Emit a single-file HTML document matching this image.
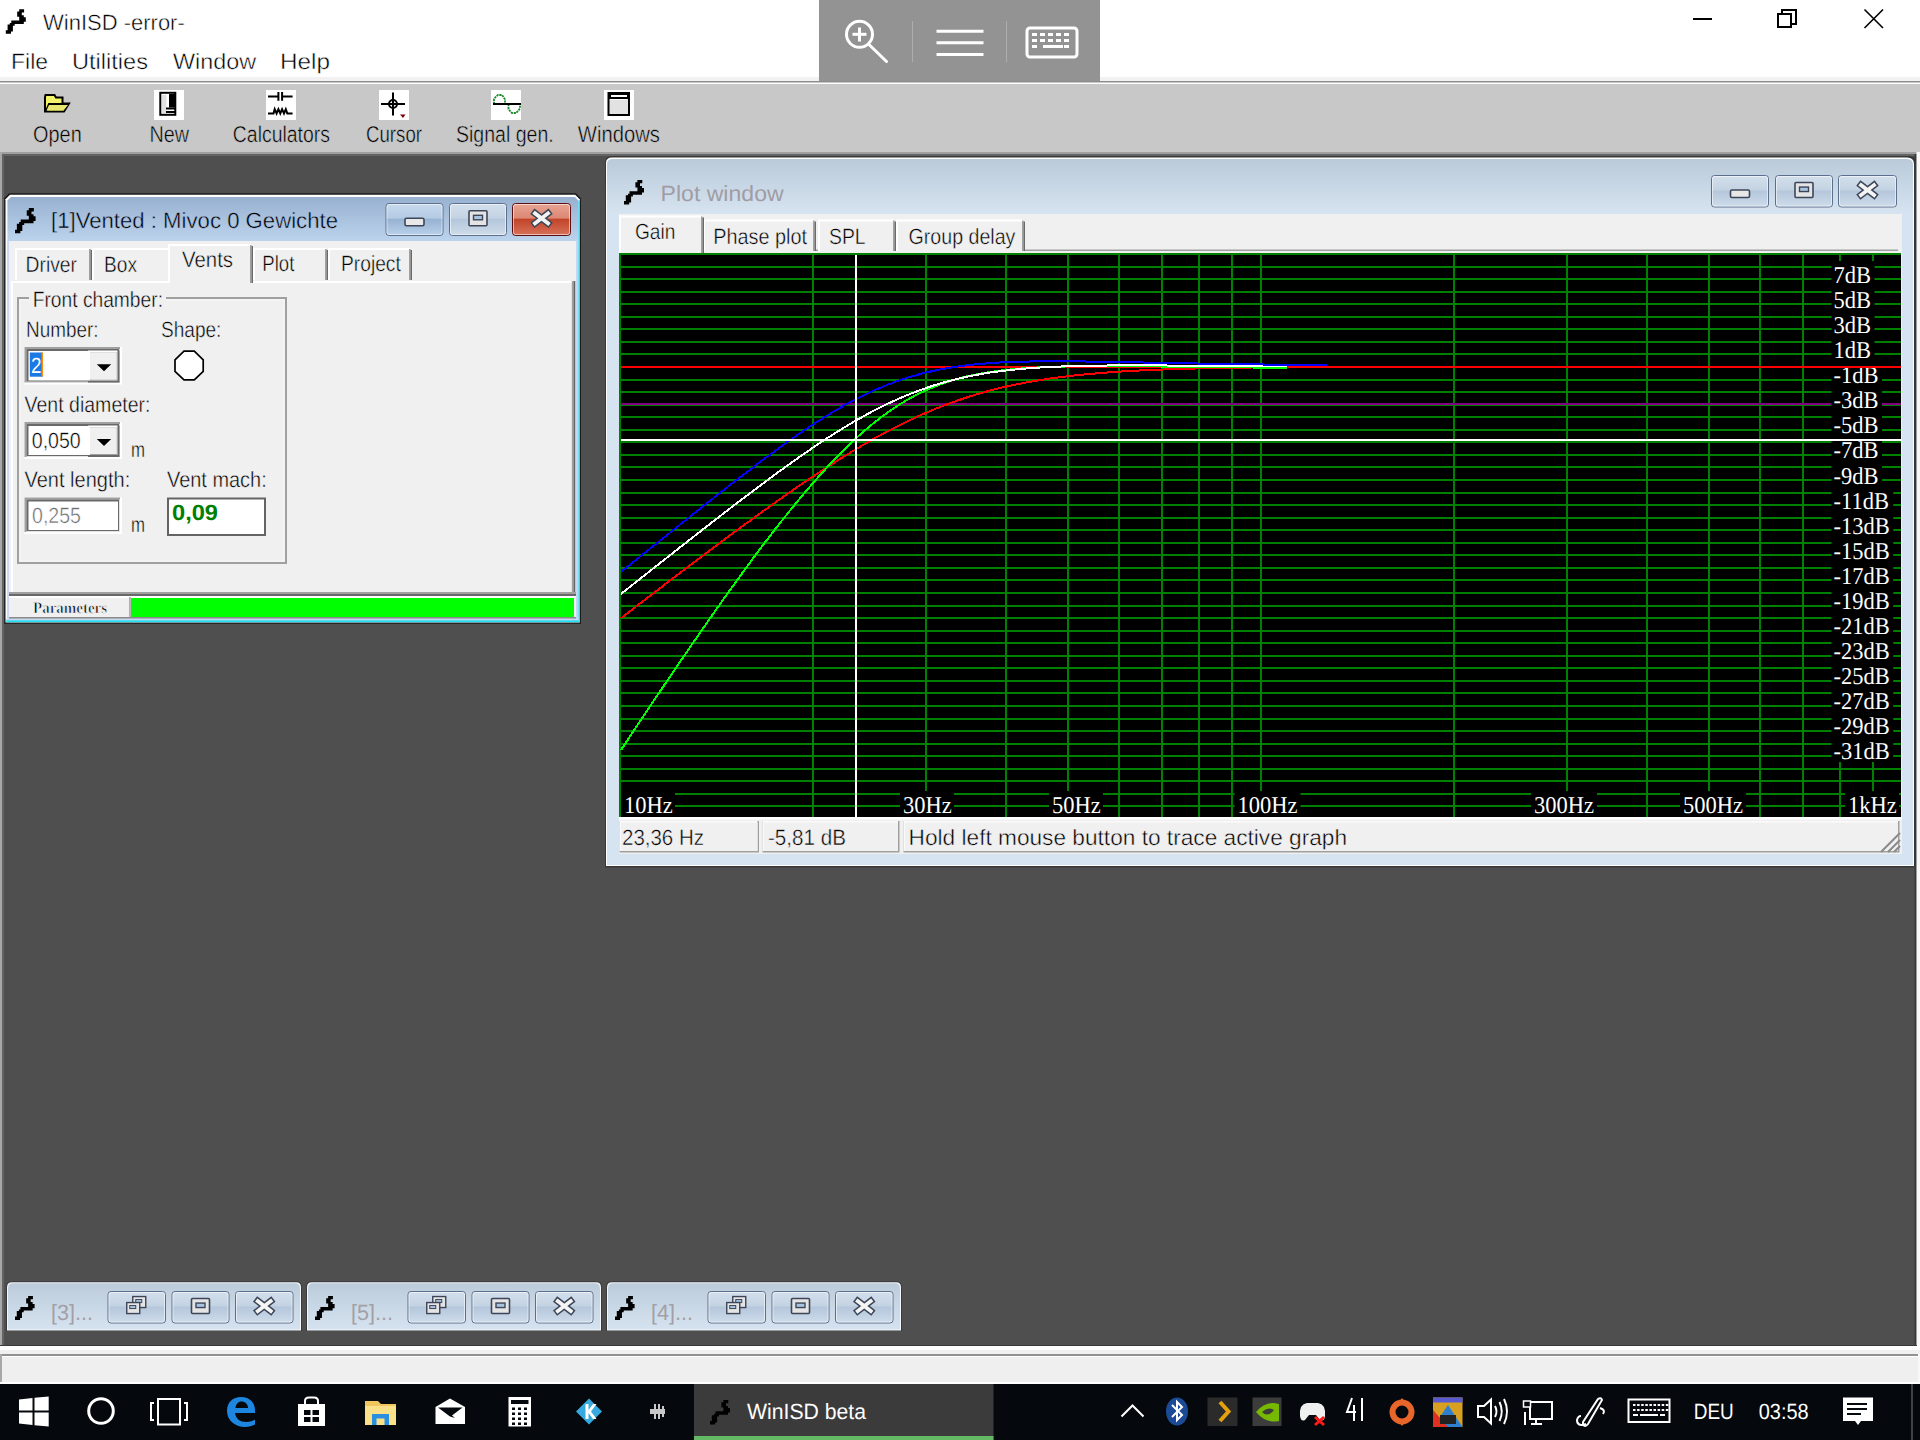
<!DOCTYPE html><html><head><meta charset="utf-8"><title>WinISD</title><style>html,body{margin:0;padding:0;width:1920px;height:1440px;overflow:hidden;background:#4f4f4f}svg{display:block}</style></head><body>
<svg width="1920" height="1440" viewBox="0 0 1920 1440" text-rendering="geometricPrecision">
<defs>

<linearGradient id="tbAct" gradientUnits="userSpaceOnUse" x1="0" y1="197" x2="0" y2="241"><stop offset="0" stop-color="#98b1d0"/><stop offset="1" stop-color="#bbd3ec"/></linearGradient>
<linearGradient id="tbInact" gradientUnits="userSpaceOnUse" x1="0" y1="159" x2="0" y2="214"><stop offset="0" stop-color="#bbcad9"/><stop offset="1" stop-color="#d6e4f1"/></linearGradient>
<linearGradient id="tbMin" gradientUnits="userSpaceOnUse" x1="0" y1="1283" x2="0" y2="1331"><stop offset="0" stop-color="#bccbda"/><stop offset="1" stop-color="#d6e4f1"/></linearGradient>
<linearGradient id="btnInact" x1="0" y1="0" x2="0" y2="1"><stop offset="0" stop-color="#d3dfeb"/><stop offset="0.45" stop-color="#c4d3e3"/><stop offset="0.5" stop-color="#b5c7dc"/><stop offset="1" stop-color="#cfdcea"/></linearGradient>
<linearGradient id="btnAct" x1="0" y1="0" x2="0" y2="1"><stop offset="0" stop-color="#c7d9ec"/><stop offset="0.45" stop-color="#b4cbe4"/><stop offset="0.5" stop-color="#97b3d3"/><stop offset="1" stop-color="#b9d0e9"/></linearGradient>
<linearGradient id="btnClose" x1="0" y1="0" x2="0" y2="1"><stop offset="0" stop-color="#e9a493"/><stop offset="0.45" stop-color="#dc8874"/><stop offset="0.5" stop-color="#c2452a"/><stop offset="1" stop-color="#d6735a"/></linearGradient>
<symbol id="appicon" overflow="visible">
<path fill="#000" d="M13.4,0 H18.3 V3.3 H16 V6.0 H18 V8.1 H20 V12.6 H18 V14.8 H8.9 V16.6 H7.1 V22.4 H5.2 V24.6 H0 V21 H1.8 V15.2 H4 V13.7 H5.5 V11.2 H13.4 V7.6 H11.4 V2.2 H13.4 Z"/>
</symbol>
</defs>
<rect x="0" y="0" width="1920" height="1440" fill="#4f4f4f" />
<rect x="0" y="0" width="1920" height="77" fill="#ffffff" />
<rect x="0" y="77" width="1920" height="4" fill="#f2f2f2" />
<rect x="0" y="81" width="1920" height="1" fill="#8c8c8c" />
<rect x="0" y="82" width="1920" height="1" fill="#c8c8c8" />
<rect x="0" y="83" width="1920" height="1" fill="#ffffff" />
<rect x="0" y="84" width="1920" height="68" fill="#c8c8c8" />
<rect x="0" y="152" width="1920" height="2" fill="#a0a0a0" />
<rect x="0" y="154" width="1920" height="2" fill="#646464" />
<rect x="0" y="152" width="2" height="1194" fill="#a8a8a8" />
<rect x="2" y="154" width="2" height="1192" fill="#646464" />
<rect x="1914.5" y="154" width="2" height="1192" fill="#3a3a3a" />
<rect x="1916.5" y="152" width="3.5" height="1232" fill="#f8f8f8" />
<rect x="0" y="1345" width="1917" height="1" fill="#3a3a3a" />
<rect x="0" y="1346" width="1920" height="4" fill="#ffffff" />
<rect x="0" y="1350" width="1920" height="4" fill="#f0f0f0" />
<rect x="0" y="1354" width="1918" height="2" fill="#919191" />
<rect x="0" y="1356" width="1918" height="1" fill="#ffffff" />
<rect x="0" y="1357" width="1918" height="25" fill="#efefef" />
<rect x="0" y="1382" width="1920" height="2" fill="#ffffff" />
<rect x="0" y="1354" width="2" height="28" fill="#a8a8a8" />
<use href="#appicon" transform="translate(5.8,9.2) scale(1.0)"/>
<text x="43" y="30" font-family="Liberation Sans" font-size="22" fill="#000" font-weight="normal" text-anchor="start" stroke="#ffffff" stroke-width="0.45" >WinISD -error-</text>
<text x="11" y="69" font-family="Liberation Sans" font-size="22" fill="#000" font-weight="normal" text-anchor="start" textLength="37" lengthAdjust="spacingAndGlyphs" stroke="#ffffff" stroke-width="0.45" >File</text>
<text x="72" y="69" font-family="Liberation Sans" font-size="22" fill="#000" font-weight="normal" text-anchor="start" textLength="76" lengthAdjust="spacingAndGlyphs" stroke="#ffffff" stroke-width="0.45" >Utilities</text>
<text x="173" y="69" font-family="Liberation Sans" font-size="22" fill="#000" font-weight="normal" text-anchor="start" textLength="83" lengthAdjust="spacingAndGlyphs" stroke="#ffffff" stroke-width="0.45" >Window</text>
<text x="280" y="69" font-family="Liberation Sans" font-size="22" fill="#000" font-weight="normal" text-anchor="start" textLength="50" lengthAdjust="spacingAndGlyphs" stroke="#ffffff" stroke-width="0.45" >Help</text>
<rect x="819" y="0" width="281" height="81" fill="#939393" />
<g fill="none" stroke="#fff" stroke-width="3"><circle cx="859.5" cy="34.3" r="13"/><line x1="852.5" y1="34.3" x2="866.5" y2="34.3"/><line x1="859.5" y1="27.5" x2="859.5" y2="41.5"/><line x1="869.5" y1="45" x2="886.5" y2="61.5" stroke-linecap="round"/><line x1="936.5" y1="31.3" x2="983.5" y2="31.3"/><line x1="936.5" y1="42.7" x2="983.5" y2="42.7"/><line x1="936.5" y1="54.6" x2="983.5" y2="54.6"/><rect x="1027" y="28" width="50" height="29" rx="3"/></g>
<rect x="912" y="21" width="1" height="41" fill="#adadad" />
<rect x="1006" y="21" width="1" height="41" fill="#adadad" />
<rect x="1032" y="33" width="5" height="3" fill="#fff" />
<rect x="1040" y="33" width="5" height="3" fill="#fff" />
<rect x="1048" y="33" width="5" height="3" fill="#fff" />
<rect x="1056" y="33" width="5" height="3" fill="#fff" />
<rect x="1064" y="33" width="5" height="3" fill="#fff" />
<rect x="1032" y="39" width="5" height="3" fill="#fff" />
<rect x="1040" y="39" width="5" height="3" fill="#fff" />
<rect x="1048" y="39" width="5" height="3" fill="#fff" />
<rect x="1056" y="39" width="5" height="3" fill="#fff" />
<rect x="1064" y="39" width="5" height="3" fill="#fff" />
<rect x="1032" y="45" width="5" height="3" fill="#fff" />
<rect x="1064" y="45" width="5" height="3" fill="#fff" />
<rect x="1043" y="45" width="20" height="3" fill="#fff" />
<rect x="1693" y="18" width="19" height="2" fill="#000" />
<g fill="none" stroke="#000" stroke-width="2"><rect x="1778" y="14" width="13" height="13"/><path d="M1782,13 V10 H1796 V24 H1792"/><path d="M1864.5,9.5 L1883,28 M1883,9.5 L1864.5,28" stroke-width="1.6"/></g>
<path d="M45.5,95 H54.5 L56,97.5 H62.5 V103.5 H69 L64,111.5 H45 V97 Z" fill="#f4f46a" stroke="#000" stroke-width="2" stroke-linejoin="miter"/>
<path d="M46,111 L49,104 H69" fill="none" stroke="#000" stroke-width="2"/>
<path d="M49,105 H68 L63.5,110.5 H46.5 Z" fill="#e8e870"/>
<rect x="154" y="90" width="30" height="30" fill="#fff" />
<rect x="160.3" y="92.8" width="15" height="22" fill="#fff" stroke="#000" stroke-width="2"/>
<rect x="162" y="95" width="4.5" height="18" fill="#e2e2e2" />
<rect x="169" y="94" width="6" height="13.5" fill="#000" />
<rect x="166" y="107.5" width="9" height="2" fill="#000" />
<rect x="166" y="111" width="9" height="2" fill="#000" />
<rect x="266" y="90" width="30" height="30" fill="#fff" />
<g stroke="#000" stroke-width="2" fill="none"><path d="M268,96.5 H278.4 M282.1,96.5 H292.6 M278.4,92 V100.8 M282.1,92 V100.8"/><path d="M268,113.4 H273.5 L274.7,109.2 L276.6,113.4 L278.4,109.2 L280.3,113.4 L282.1,109.2 L284,113.4 L285.8,109.2 L287.3,113.4 H292.6"/></g>
<rect x="379" y="90" width="30" height="30" fill="#fff" />
<g stroke="#000" stroke-width="2" fill="none"><path d="M393,92.5 V115.5 M381,104 H405"/><circle cx="393" cy="104" r="4"/></g>
<path d="M400,114.5 H405.5 L403,118 Z" fill="#7a0000"/>
<rect x="491" y="90" width="30" height="30" fill="#fff" />
<path d="M494,104 V99 L496,96.5 L498,95 H502 L503.5,97 L505,99.5 V104 M508.5,104 V109 L510.5,111.5 L512,113 H516 L518,111 L520,108.5 V104" fill="none" stroke="#1a8a2a" stroke-width="1.8" stroke-dasharray="2.2,0.8"/>
<rect x="493" y="103" width="28" height="2" fill="#000" />
<rect x="604" y="90" width="30" height="30" fill="#fff" />
<rect x="608.5" y="93" width="20.5" height="22" fill="#e2e2e2" />
<rect x="608.5" y="93" width="20.5" height="22" fill="none" stroke="#000" stroke-width="2"/>
<rect x="608.5" y="93" width="20.5" height="6" fill="#000" />
<rect x="611" y="95" width="16" height="2" fill="#fff" />
<rect x="610" y="99" width="17" height="1" fill="#fff" />
<g transform="translate(0,142) scale(1,1.1) translate(0,-142)">
<text x="33" y="142" font-family="Liberation Sans" font-size="21" fill="#000" font-weight="normal" text-anchor="start" textLength="48.7" lengthAdjust="spacingAndGlyphs" stroke="#c8c8c8" stroke-width="0.45" >Open</text>
<text x="149.4" y="142" font-family="Liberation Sans" font-size="21" fill="#000" font-weight="normal" text-anchor="start" textLength="39.6" lengthAdjust="spacingAndGlyphs" stroke="#c8c8c8" stroke-width="0.45" >New</text>
<text x="232.8" y="142" font-family="Liberation Sans" font-size="21" fill="#000" font-weight="normal" text-anchor="start" textLength="97.2" lengthAdjust="spacingAndGlyphs" stroke="#c8c8c8" stroke-width="0.45" >Calculators</text>
<text x="366" y="142" font-family="Liberation Sans" font-size="21" fill="#000" font-weight="normal" text-anchor="start" textLength="56" lengthAdjust="spacingAndGlyphs" stroke="#c8c8c8" stroke-width="0.45" >Cursor</text>
<text x="456" y="142" font-family="Liberation Sans" font-size="21" fill="#000" font-weight="normal" text-anchor="start" textLength="97.7" lengthAdjust="spacingAndGlyphs" stroke="#c8c8c8" stroke-width="0.45" >Signal gen.</text>
<text x="577.8" y="142" font-family="Liberation Sans" font-size="21" fill="#000" font-weight="normal" text-anchor="start" textLength="82.2" lengthAdjust="spacingAndGlyphs" stroke="#c8c8c8" stroke-width="0.45" >Windows</text>
</g>
<path d="M4.2,623.7 V198.3 L9.2,193.3 H576 L581,198.3 V623.7 Z" fill="#1a1a1a"/>
<path d="M5.5,622.4000000000001 V199.20000000000002 L10.0,194.70000000000002 H575.2 L579.7,199.20000000000002 V622.4000000000001 Z" fill="#ffffff"/>
<path d="M7.4,621.1 V200.5 L10.9,197.0 H574.9 L578.4,200.5 V621.1 Z" fill="url(#tbAct)"/>
<rect x="578.4" y="200.8" width="1.4" height="420.40000000000003" fill="#30d8f4" />
<rect x="6.2" y="620.2" width="572.8" height="2" fill="#22def0" />
<rect x="6.2" y="618.7" width="572.8" height="1.5" fill="#c8d8f0" />
<rect x="7.2" y="241" width="570.3" height="378.70000000000005" fill="#c8d8f0" />
<use href="#appicon" transform="translate(15,208) scale(1.03)"/>
<text x="51" y="228.4" font-family="Liberation Sans" font-size="22" fill="#000" font-weight="normal" text-anchor="start" textLength="287" lengthAdjust="spacingAndGlyphs" stroke="#abc4e1" stroke-width="0.45" >[1]Vented : Mivoc 0 Gewichte</text>
<rect x="386.0" y="203.5" width="57" height="32" rx="3" fill="url(#btnAct)" stroke="#5c6f8c" stroke-width="1"/>
<rect x="387.0" y="204.5" width="55" height="30" rx="2" fill="none" stroke="#ffffff" stroke-opacity="0.55" stroke-width="1"/>
<rect x="405.0" y="218.3" width="19" height="7.5" rx="1.5" fill="#e8e8e8" stroke="#3c4658" stroke-width="1.6"/>
<rect x="449.5" y="203.5" width="57" height="32" rx="3" fill="url(#btnInact)" stroke="#5c6f8c" stroke-width="1"/>
<rect x="450.5" y="204.5" width="55" height="30" rx="2" fill="none" stroke="#ffffff" stroke-opacity="0.55" stroke-width="1"/>
<rect x="469.0" y="210.8" width="18" height="15" rx="1" fill="#e4e4e4" stroke="#3c4658" stroke-width="1.6"/>
<rect x="473.5" y="215.3" width="9" height="4.5" fill="#a8c4e0" stroke="#3c4658" stroke-width="1.4"/>
<rect x="512.5" y="203.5" width="58" height="32" rx="3" fill="url(#btnClose)" stroke="#5a1010" stroke-width="1"/>
<rect x="513.5" y="204.5" width="56" height="30" rx="2" fill="none" stroke="#ffffff" stroke-opacity="0.55" stroke-width="1"/>
<path d="M535.0,213.3 L548.0,223.3 M548.0,213.3 L535.0,223.3" stroke="#3c4658" stroke-width="6.8" stroke-linecap="square"/>
<path d="M535.0,213.3 L548.0,223.3 M548.0,213.3 L535.0,223.3" stroke="#f4f4f4" stroke-width="3.8" stroke-linecap="square"/>
<rect x="9" y="241" width="567" height="353" fill="#f0f0f0" />
<rect x="15" y="248" width="77" height="33" fill="#f0f0f0" />
<rect x="15" y="248" width="2" height="33" fill="#ffffff" />
<rect x="15" y="248" width="75" height="2" fill="#ffffff" />
<rect x="89" y="249" width="1.5" height="32" fill="#a0a0a0" />
<rect x="90.5" y="250" width="1.5" height="31" fill="#696969" />
<rect x="92" y="248" width="79" height="33" fill="#f0f0f0" />
<rect x="92" y="248" width="2" height="33" fill="#ffffff" />
<rect x="92" y="248" width="77" height="2" fill="#ffffff" />
<rect x="168" y="249" width="1.5" height="32" fill="#a0a0a0" />
<rect x="169.5" y="250" width="1.5" height="31" fill="#696969" />
<rect x="253" y="248" width="75" height="33" fill="#f0f0f0" />
<rect x="253" y="248" width="2" height="33" fill="#ffffff" />
<rect x="253" y="248" width="73" height="2" fill="#ffffff" />
<rect x="325" y="249" width="1.5" height="32" fill="#a0a0a0" />
<rect x="326.5" y="250" width="1.5" height="31" fill="#696969" />
<rect x="328" y="248" width="84" height="33" fill="#f0f0f0" />
<rect x="328" y="248" width="2" height="33" fill="#ffffff" />
<rect x="328" y="248" width="82" height="2" fill="#ffffff" />
<rect x="409" y="249" width="1.5" height="32" fill="#a0a0a0" />
<rect x="410.5" y="250" width="1.5" height="31" fill="#696969" />
<rect x="11" y="280" width="565" height="314" fill="#f0f0f0" />
<rect x="11" y="281" width="563" height="2" fill="#ffffff" />
<rect x="11" y="281" width="2" height="311" fill="#ffffff" />
<rect x="571.8" y="281" width="1.7" height="313" fill="#a0a0a0" />
<rect x="573.5" y="281" width="1.8" height="313" fill="#656565" />
<rect x="168" y="244" width="85" height="39" fill="#f0f0f0" />
<rect x="168" y="244" width="2" height="39" fill="#ffffff" />
<rect x="168" y="244" width="83" height="2" fill="#ffffff" />
<rect x="250" y="245" width="1.5" height="38" fill="#a0a0a0" />
<rect x="251.5" y="246" width="1.5" height="37" fill="#696969" />
<rect x="170" y="280" width="80" height="4" fill="#f0f0f0" />
<text x="25.5" y="271.7" font-family="Liberation Sans" font-size="22" fill="#000" font-weight="normal" text-anchor="start" textLength="51.5" lengthAdjust="spacingAndGlyphs" stroke="#f0f0f0" stroke-width="0.45" >Driver</text>
<text x="104" y="271.7" font-family="Liberation Sans" font-size="22" fill="#000" font-weight="normal" text-anchor="start" textLength="33" lengthAdjust="spacingAndGlyphs" stroke="#f0f0f0" stroke-width="0.45" >Box</text>
<text x="182" y="267.4" font-family="Liberation Sans" font-size="22" fill="#000" font-weight="normal" text-anchor="start" textLength="51" lengthAdjust="spacingAndGlyphs" stroke="#f0f0f0" stroke-width="0.45" >Vents</text>
<text x="262.3" y="271" font-family="Liberation Sans" font-size="22" fill="#000" font-weight="normal" text-anchor="start" textLength="32" lengthAdjust="spacingAndGlyphs" stroke="#f0f0f0" stroke-width="0.45" >Plot</text>
<text x="341" y="271" font-family="Liberation Sans" font-size="22" fill="#000" font-weight="normal" text-anchor="start" textLength="59.8" lengthAdjust="spacingAndGlyphs" stroke="#f0f0f0" stroke-width="0.45" >Project</text>
<rect x="18" y="298" width="268" height="265" fill="none" stroke="#a0a0a0" stroke-width="2"/>
<rect x="20" y="300" width="264" height="261" fill="none" stroke="#ffffff" stroke-width="0.8" stroke-opacity="0.6"/>
<rect x="29" y="288" width="137" height="20" fill="#f0f0f0" />
<text x="32.7" y="307" font-family="Liberation Sans" font-size="22" fill="#000" font-weight="normal" text-anchor="start" textLength="130.3" lengthAdjust="spacingAndGlyphs" stroke="#f0f0f0" stroke-width="0.45" >Front chamber:</text>
<text x="26" y="337.4" font-family="Liberation Sans" font-size="22" fill="#000" font-weight="normal" text-anchor="start" textLength="72.5" lengthAdjust="spacingAndGlyphs" stroke="#f0f0f0" stroke-width="0.45" >Number:</text>
<text x="161" y="337.4" font-family="Liberation Sans" font-size="22" fill="#000" font-weight="normal" text-anchor="start" textLength="60.4" lengthAdjust="spacingAndGlyphs" stroke="#f0f0f0" stroke-width="0.45" >Shape:</text>
<rect x="24.5" y="347" width="97.5" height="37.5" fill="#ffffff" />
<rect x="24.5" y="347" width="95.5" height="35.5" fill="#a0a0a0" />
<rect x="26.5" y="349" width="93.5" height="33.5" fill="#e3e3e3" />
<rect x="26.5" y="349" width="92.5" height="32.5" fill="#696969" />
<rect x="28.5" y="351" width="89.5" height="29.5" fill="#fff" />
<rect x="88.0" y="350.5" width="31.5" height="32.0" fill="#696969" />
<rect x="88.0" y="350.5" width="29.5" height="30.0" fill="#ffffff" />
<rect x="90.0" y="352.5" width="27.5" height="28.0" fill="#a0a0a0" />
<rect x="90.0" y="352.5" width="26.5" height="27.0" fill="#f0f0f0" />
<rect x="91.0" y="353.5" width="25.5" height="26.0" fill="#f0f0f0" />
<path d="M96.8,364.25 H111.2 L104.0,371.25 Z" fill="#000"/>
<rect x="29.8" y="352.5" width="13" height="24.2" fill="#1c78e4" />
<text x="31" y="373" font-family="Liberation Sans" font-size="22" fill="#fff" font-weight="normal" text-anchor="start" textLength="10.5" lengthAdjust="spacingAndGlyphs" >2</text>
<rect x="41.5" y="352.5" width="1.5" height="24" fill="#ff8c00" />
<path d="M184,351.2 H194.3 L203.2,359.8 V371.3 L194.3,379.8 H184 L175,371.3 V359.8 Z" fill="#fff" stroke="#000" stroke-width="1.7"/>
<text x="24.5" y="412.2" font-family="Liberation Sans" font-size="22" fill="#000" font-weight="normal" text-anchor="start" textLength="126" lengthAdjust="spacingAndGlyphs" stroke="#f0f0f0" stroke-width="0.45" >Vent diameter:</text>
<rect x="24.5" y="422" width="97.5" height="37" fill="#ffffff" />
<rect x="24.5" y="422" width="95.5" height="35" fill="#a0a0a0" />
<rect x="26.5" y="424" width="93.5" height="33" fill="#e3e3e3" />
<rect x="26.5" y="424" width="92.5" height="32" fill="#696969" />
<rect x="28.5" y="426" width="89.5" height="29" fill="#fff" />
<rect x="88.0" y="425.5" width="31.5" height="31.5" fill="#696969" />
<rect x="88.0" y="425.5" width="29.5" height="29.5" fill="#ffffff" />
<rect x="90.0" y="427.5" width="27.5" height="27.5" fill="#a0a0a0" />
<rect x="90.0" y="427.5" width="26.5" height="26.5" fill="#f0f0f0" />
<rect x="91.0" y="428.5" width="25.5" height="25.5" fill="#f0f0f0" />
<path d="M96.8,439.0 H111.2 L104.0,446.0 Z" fill="#000"/>
<text x="31.75" y="448" font-family="Liberation Sans" font-size="22" fill="#000" font-weight="normal" text-anchor="start" textLength="49" lengthAdjust="spacingAndGlyphs" stroke="#ffffff" stroke-width="0.45" >0,050</text>
<text x="131" y="456.6" font-family="Liberation Sans" font-size="22" fill="#000" font-weight="normal" text-anchor="start" textLength="14" lengthAdjust="spacingAndGlyphs" stroke="#f0f0f0" stroke-width="0.45" >m</text>
<text x="24.5" y="487" font-family="Liberation Sans" font-size="22" fill="#000" font-weight="normal" text-anchor="start" textLength="105.7" lengthAdjust="spacingAndGlyphs" stroke="#f0f0f0" stroke-width="0.45" >Vent length:</text>
<text x="167" y="487" font-family="Liberation Sans" font-size="22" fill="#000" font-weight="normal" text-anchor="start" textLength="99.7" lengthAdjust="spacingAndGlyphs" stroke="#f0f0f0" stroke-width="0.45" >Vent mach:</text>
<rect x="24.5" y="497.5" width="97.5" height="36.5" fill="#ffffff" />
<rect x="24.5" y="497.5" width="95.5" height="34.5" fill="#a0a0a0" />
<rect x="26.5" y="499.5" width="93.5" height="32.5" fill="#e3e3e3" />
<rect x="26.5" y="499.5" width="92.5" height="31.5" fill="#696969" />
<rect x="28.5" y="501.5" width="89.5" height="28.5" fill="#fff" />
<text x="32" y="523" font-family="Liberation Sans" font-size="22" fill="#6d6d6d" font-weight="normal" text-anchor="start" textLength="49" lengthAdjust="spacingAndGlyphs" stroke="#ffffff" stroke-width="0.45" >0,255</text>
<text x="131" y="532" font-family="Liberation Sans" font-size="22" fill="#000" font-weight="normal" text-anchor="start" textLength="14" lengthAdjust="spacingAndGlyphs" stroke="#f0f0f0" stroke-width="0.45" >m</text>
<rect x="167" y="497.5" width="99" height="38.5" fill="#646464" />
<rect x="169" y="499.5" width="95" height="34.5" fill="#ffffff" />
<text x="172" y="520" font-family="Liberation Sans" font-size="22" fill="#008000" font-weight="bold" text-anchor="start" textLength="46" lengthAdjust="spacingAndGlyphs" >0,09</text>
<rect x="9" y="592" width="567" height="26" fill="#f0f0f0" />
<rect x="9" y="592" width="567" height="2" fill="#a0a0a0" />
<rect x="9" y="594" width="567" height="2" fill="#696969" />
<rect x="9" y="596" width="567" height="2" fill="#ffffff" />
<rect x="9" y="617" width="567" height="1.5" fill="#8a8a8a" />
<rect x="129.2" y="597" width="1.5" height="20" fill="#a0a0a0" />
<rect x="131" y="598" width="443" height="19" fill="#00ff00" />
<text x="33" y="612.7" font-family="Liberation Serif" font-size="16" fill="#000" font-weight="bold" text-anchor="start" textLength="74" lengthAdjust="spacingAndGlyphs" stroke="#f0f0f0" stroke-width="0.7" >Parameters</text>
<path d="M605,867.5 V163 Q605,156 612,156 H1909 Q1916,156 1916,163 V867.5 Z" fill="#383838"/>
<path d="M606,866.0 V163 Q606,157.5 612,157.5 H1907 Q1914,157.5 1914,164 V866.0 Z" fill="#ffffff"/>
<path d="M607,865.0 V164 Q607,159 613,159 H1907 Q1913,159 1913,165 V865.0 Z" fill="url(#tbInact)"/>
<rect x="607" y="214" width="1306" height="651.0" fill="#d6e3f0" />
<use href="#appicon" transform="translate(624,180) scale(1.0)"/>
<text x="660.6" y="200.6" font-family="Liberation Sans" font-size="22" fill="#a09ca4" font-weight="normal" text-anchor="start" textLength="123" lengthAdjust="spacingAndGlyphs" >Plot window</text>
<rect x="1711.5" y="175.5" width="57" height="31.5" rx="3" fill="url(#btnInact)" stroke="#5c6f8c" stroke-width="1"/>
<rect x="1712.5" y="176.5" width="55" height="29.5" rx="2" fill="none" stroke="#ffffff" stroke-opacity="0.55" stroke-width="1"/>
<rect x="1730.5" y="190.05" width="19" height="7.5" rx="1.5" fill="#e8e8e8" stroke="#3c4658" stroke-width="1.6"/>
<rect x="1775.5" y="175.5" width="57" height="31.5" rx="3" fill="url(#btnInact)" stroke="#5c6f8c" stroke-width="1"/>
<rect x="1776.5" y="176.5" width="55" height="29.5" rx="2" fill="none" stroke="#ffffff" stroke-opacity="0.55" stroke-width="1"/>
<rect x="1795.0" y="182.55" width="18" height="15" rx="1" fill="#e4e4e4" stroke="#3c4658" stroke-width="1.6"/>
<rect x="1799.5" y="187.05" width="9" height="4.5" fill="#a8c4e0" stroke="#3c4658" stroke-width="1.4"/>
<rect x="1838.5" y="175.5" width="58" height="31.5" rx="3" fill="url(#btnInact)" stroke="#5c6f8c" stroke-width="1"/>
<rect x="1839.5" y="176.5" width="56" height="29.5" rx="2" fill="none" stroke="#ffffff" stroke-opacity="0.55" stroke-width="1"/>
<path d="M1861.0,185.05 L1874.0,195.05 M1874.0,185.05 L1861.0,195.05" stroke="#3c4658" stroke-width="6.8" stroke-linecap="square"/>
<path d="M1861.0,185.05 L1874.0,195.05 M1874.0,185.05 L1861.0,195.05" stroke="#f4f4f4" stroke-width="3.8" stroke-linecap="square"/>
<rect x="619" y="214" width="1283" height="640" fill="#f0f0f0" />
<rect x="619" y="249.5" width="1279" height="1.5" fill="#a0a0a0" />
<rect x="703" y="219.5" width="113" height="31.5" fill="#f0f0f0" />
<rect x="703" y="219.5" width="2" height="31.5" fill="#ffffff" />
<rect x="703" y="219.5" width="111" height="2" fill="#ffffff" />
<rect x="813" y="220.5" width="1.5" height="30.5" fill="#a0a0a0" />
<rect x="814.5" y="221.5" width="1.5" height="29.5" fill="#696969" />
<rect x="818" y="219.5" width="78" height="31.5" fill="#f0f0f0" />
<rect x="818" y="219.5" width="2" height="31.5" fill="#ffffff" />
<rect x="818" y="219.5" width="76" height="2" fill="#ffffff" />
<rect x="893" y="220.5" width="1.5" height="30.5" fill="#a0a0a0" />
<rect x="894.5" y="221.5" width="1.5" height="29.5" fill="#696969" />
<rect x="896" y="219.5" width="129" height="31.5" fill="#f0f0f0" />
<rect x="896" y="219.5" width="2" height="31.5" fill="#ffffff" />
<rect x="896" y="219.5" width="127" height="2" fill="#ffffff" />
<rect x="1022" y="220.5" width="1.5" height="30.5" fill="#a0a0a0" />
<rect x="1023.5" y="221.5" width="1.5" height="29.5" fill="#696969" />
<rect x="619" y="215.5" width="85" height="37.5" fill="#f0f0f0" />
<rect x="619" y="215.5" width="2" height="37.5" fill="#ffffff" />
<rect x="619" y="215.5" width="83" height="2" fill="#ffffff" />
<rect x="701" y="216.5" width="1.5" height="36.5" fill="#a0a0a0" />
<rect x="702.5" y="217.5" width="1.5" height="35.5" fill="#696969" />
<text x="635" y="239.4" font-family="Liberation Sans" font-size="22" fill="#000" font-weight="normal" text-anchor="start" textLength="40.4" lengthAdjust="spacingAndGlyphs" stroke="#f0f0f0" stroke-width="0.45" >Gain</text>
<text x="713.3" y="243.7" font-family="Liberation Sans" font-size="22" fill="#000" font-weight="normal" text-anchor="start" textLength="93.7" lengthAdjust="spacingAndGlyphs" stroke="#f0f0f0" stroke-width="0.45" >Phase plot</text>
<text x="829" y="243.7" font-family="Liberation Sans" font-size="22" fill="#000" font-weight="normal" text-anchor="start" textLength="36.6" lengthAdjust="spacingAndGlyphs" stroke="#f0f0f0" stroke-width="0.45" >SPL</text>
<text x="908.6" y="243.7" font-family="Liberation Sans" font-size="22" fill="#000" font-weight="normal" text-anchor="start" textLength="106.8" lengthAdjust="spacingAndGlyphs" stroke="#f0f0f0" stroke-width="0.45" >Group delay</text>
<rect x="619" y="817" width="1283" height="37" fill="#f0f0f0" />
<rect x="619" y="817" width="1283" height="2.5" fill="#ffffff" />
<rect x="619.5" y="821" width="139.5" height="31.5" fill="#a0a0a0" />
<rect x="619.5" y="821" width="138.0" height="30.0" fill="#fafafa" />
<rect x="621.0" y="822.5" width="136.5" height="28.5" fill="#f0f0f0" />
<rect x="762.5" y="821" width="137" height="31.5" fill="#a0a0a0" />
<rect x="762.5" y="821" width="135.5" height="30.0" fill="#fafafa" />
<rect x="764.0" y="822.5" width="134" height="28.5" fill="#f0f0f0" />
<rect x="903.5" y="821" width="996" height="31.5" fill="#a0a0a0" />
<rect x="903.5" y="821" width="994.5" height="30.0" fill="#fafafa" />
<rect x="905.0" y="822.5" width="993" height="28.5" fill="#f0f0f0" />
<text x="622" y="844.5" font-family="Liberation Sans" font-size="22" fill="#000" font-weight="normal" text-anchor="start" textLength="82" lengthAdjust="spacingAndGlyphs" stroke="#f0f0f0" stroke-width="0.45" >23,36 Hz</text>
<text x="768" y="844.5" font-family="Liberation Sans" font-size="22" fill="#000" font-weight="normal" text-anchor="start" textLength="78" lengthAdjust="spacingAndGlyphs" stroke="#f0f0f0" stroke-width="0.45" >-5,81 dB</text>
<text x="908.6" y="844.5" font-family="Liberation Sans" font-size="22" fill="#000" font-weight="normal" text-anchor="start" textLength="438.4" lengthAdjust="spacingAndGlyphs" stroke="#f0f0f0" stroke-width="0.45" >Hold left mouse button to trace active graph</text>
<g stroke="#8a8a8a" stroke-width="2"><path d="M1881,852 L1900,833 M1888,852 L1900,840 M1894,852 L1900,846"/></g>
<rect x="619" y="253" width="1282" height="564" fill="#000000" />
<g shape-rendering="crispEdges">
<rect x="619" y="266" width="1282" height="2" fill="#008000" />
<rect x="619" y="278" width="1282" height="2" fill="#008000" />
<rect x="619" y="291" width="1282" height="2" fill="#008000" />
<rect x="619" y="303" width="1282" height="2" fill="#008000" />
<rect x="619" y="316" width="1282" height="2" fill="#008000" />
<rect x="619" y="328" width="1282" height="2" fill="#008000" />
<rect x="619" y="341" width="1282" height="2" fill="#008000" />
<rect x="619" y="353" width="1282" height="2" fill="#008000" />
<rect x="619" y="366" width="1282" height="2" fill="#008000" />
<rect x="619" y="379" width="1282" height="2" fill="#008000" />
<rect x="619" y="391" width="1282" height="2" fill="#008000" />
<rect x="619" y="404" width="1282" height="2" fill="#008000" />
<rect x="619" y="416" width="1282" height="2" fill="#008000" />
<rect x="619" y="429" width="1282" height="2" fill="#008000" />
<rect x="619" y="441" width="1282" height="2" fill="#008000" />
<rect x="619" y="454" width="1282" height="2" fill="#008000" />
<rect x="619" y="466" width="1282" height="2" fill="#008000" />
<rect x="619" y="479" width="1282" height="2" fill="#008000" />
<rect x="619" y="492" width="1282" height="2" fill="#008000" />
<rect x="619" y="504" width="1282" height="2" fill="#008000" />
<rect x="619" y="517" width="1282" height="2" fill="#008000" />
<rect x="619" y="529" width="1282" height="2" fill="#008000" />
<rect x="619" y="542" width="1282" height="2" fill="#008000" />
<rect x="619" y="554" width="1282" height="2" fill="#008000" />
<rect x="619" y="567" width="1282" height="2" fill="#008000" />
<rect x="619" y="579" width="1282" height="2" fill="#008000" />
<rect x="619" y="592" width="1282" height="2" fill="#008000" />
<rect x="619" y="605" width="1282" height="2" fill="#008000" />
<rect x="619" y="617" width="1282" height="2" fill="#008000" />
<rect x="619" y="630" width="1282" height="2" fill="#008000" />
<rect x="619" y="642" width="1282" height="2" fill="#008000" />
<rect x="619" y="655" width="1282" height="2" fill="#008000" />
<rect x="619" y="667" width="1282" height="2" fill="#008000" />
<rect x="619" y="680" width="1282" height="2" fill="#008000" />
<rect x="619" y="692" width="1282" height="2" fill="#008000" />
<rect x="619" y="705" width="1282" height="2" fill="#008000" />
<rect x="619" y="718" width="1282" height="2" fill="#008000" />
<rect x="619" y="730" width="1282" height="2" fill="#008000" />
<rect x="619" y="743" width="1282" height="2" fill="#008000" />
<rect x="619" y="755" width="1282" height="2" fill="#008000" />
<rect x="619" y="768" width="1282" height="2" fill="#008000" />
<rect x="619" y="780" width="1282" height="2" fill="#008000" />
<rect x="619" y="793" width="1282" height="2" fill="#008000" />
<rect x="619" y="805" width="1282" height="2" fill="#008000" />
<rect x="812" y="253" width="2" height="564" fill="#008000" />
<rect x="925" y="253" width="2" height="564" fill="#008000" />
<rect x="1005" y="253" width="2" height="564" fill="#008000" />
<rect x="1067" y="253" width="2" height="564" fill="#008000" />
<rect x="1118" y="253" width="2" height="564" fill="#008000" />
<rect x="1161" y="253" width="2" height="564" fill="#008000" />
<rect x="1198" y="253" width="2" height="564" fill="#008000" />
<rect x="1231" y="253" width="2" height="564" fill="#008000" />
<rect x="1260" y="253" width="2" height="564" fill="#008000" />
<rect x="1453" y="253" width="2" height="564" fill="#008000" />
<rect x="1566" y="253" width="2" height="564" fill="#008000" />
<rect x="1646" y="253" width="2" height="564" fill="#008000" />
<rect x="1708" y="253" width="2" height="564" fill="#008000" />
<rect x="1759" y="253" width="2" height="564" fill="#008000" />
<rect x="1802" y="253" width="2" height="564" fill="#008000" />
<rect x="1839" y="253" width="2" height="564" fill="#008000" />
<rect x="1872" y="253" width="2" height="564" fill="#008000" />
<rect x="619" y="253" width="1282" height="2" fill="#008000" />
<rect x="619" y="253" width="2" height="564" fill="#008000" />
<rect x="621" y="403" width="1280" height="2" fill="#800080" />
</g>
<rect x="1831.5" y="261" width="43.0" height="26" fill="#000" />
<g transform="translate(0,283.20) scale(1,1.07) translate(0,-283.20)">
<text x="1833.5" y="283.2" font-family="Liberation Serif" font-size="22.5" fill="#ffffff" font-weight="normal" text-anchor="start" >7dB</text>
</g>
<rect x="1831.5" y="286" width="43.0" height="26" fill="#000" />
<g transform="translate(0,308.24) scale(1,1.07) translate(0,-308.24)">
<text x="1833.5" y="308.24" font-family="Liberation Serif" font-size="22.5" fill="#ffffff" font-weight="normal" text-anchor="start" >5dB</text>
</g>
<rect x="1831.5" y="311" width="43.0" height="26" fill="#000" />
<g transform="translate(0,333.28) scale(1,1.07) translate(0,-333.28)">
<text x="1833.5" y="333.28" font-family="Liberation Serif" font-size="22.5" fill="#ffffff" font-weight="normal" text-anchor="start" >3dB</text>
</g>
<rect x="1831.5" y="336" width="43.0" height="26" fill="#000" />
<g transform="translate(0,358.32) scale(1,1.07) translate(0,-358.32)">
<text x="1833.5" y="358.32" font-family="Liberation Serif" font-size="22.5" fill="#ffffff" font-weight="normal" text-anchor="start" >1dB</text>
</g>
<rect x="1831.5" y="361" width="50.5" height="26" fill="#000" />
<g transform="translate(0,383.36) scale(1,1.07) translate(0,-383.36)">
<text x="1833.5" y="383.36" font-family="Liberation Serif" font-size="22.5" fill="#ffffff" font-weight="normal" text-anchor="start" >-1dB</text>
</g>
<rect x="1831.5" y="386" width="50.5" height="26" fill="#000" />
<g transform="translate(0,408.40) scale(1,1.07) translate(0,-408.40)">
<text x="1833.5" y="408.4" font-family="Liberation Serif" font-size="22.5" fill="#ffffff" font-weight="normal" text-anchor="start" >-3dB</text>
</g>
<rect x="1831.5" y="411" width="50.5" height="26" fill="#000" />
<g transform="translate(0,433.44) scale(1,1.07) translate(0,-433.44)">
<text x="1833.5" y="433.44" font-family="Liberation Serif" font-size="22.5" fill="#ffffff" font-weight="normal" text-anchor="start" >-5dB</text>
</g>
<rect x="1831.5" y="436" width="50.5" height="26" fill="#000" />
<g transform="translate(0,458.48) scale(1,1.07) translate(0,-458.48)">
<text x="1833.5" y="458.48" font-family="Liberation Serif" font-size="22.5" fill="#ffffff" font-weight="normal" text-anchor="start" >-7dB</text>
</g>
<rect x="1831.5" y="461" width="50.5" height="26" fill="#000" />
<g transform="translate(0,483.52) scale(1,1.07) translate(0,-483.52)">
<text x="1833.5" y="483.52" font-family="Liberation Serif" font-size="22.5" fill="#ffffff" font-weight="normal" text-anchor="start" >-9dB</text>
</g>
<rect x="1831.5" y="486" width="61.75" height="26" fill="#000" />
<g transform="translate(0,508.56) scale(1,1.07) translate(0,-508.56)">
<text x="1833.5" y="508.55999999999995" font-family="Liberation Serif" font-size="22.5" fill="#ffffff" font-weight="normal" text-anchor="start" >-11dB</text>
</g>
<rect x="1831.5" y="511" width="61.75" height="26" fill="#000" />
<g transform="translate(0,533.60) scale(1,1.07) translate(0,-533.60)">
<text x="1833.5" y="533.5999999999999" font-family="Liberation Serif" font-size="22.5" fill="#ffffff" font-weight="normal" text-anchor="start" >-13dB</text>
</g>
<rect x="1831.5" y="536" width="61.75" height="26" fill="#000" />
<g transform="translate(0,558.64) scale(1,1.07) translate(0,-558.64)">
<text x="1833.5" y="558.64" font-family="Liberation Serif" font-size="22.5" fill="#ffffff" font-weight="normal" text-anchor="start" >-15dB</text>
</g>
<rect x="1831.5" y="561" width="61.75" height="26" fill="#000" />
<g transform="translate(0,583.68) scale(1,1.07) translate(0,-583.68)">
<text x="1833.5" y="583.6800000000001" font-family="Liberation Serif" font-size="22.5" fill="#ffffff" font-weight="normal" text-anchor="start" >-17dB</text>
</g>
<rect x="1831.5" y="586" width="61.75" height="26" fill="#000" />
<g transform="translate(0,608.72) scale(1,1.07) translate(0,-608.72)">
<text x="1833.5" y="608.72" font-family="Liberation Serif" font-size="22.5" fill="#ffffff" font-weight="normal" text-anchor="start" >-19dB</text>
</g>
<rect x="1831.5" y="611" width="61.75" height="26" fill="#000" />
<g transform="translate(0,633.76) scale(1,1.07) translate(0,-633.76)">
<text x="1833.5" y="633.76" font-family="Liberation Serif" font-size="22.5" fill="#ffffff" font-weight="normal" text-anchor="start" >-21dB</text>
</g>
<rect x="1831.5" y="636" width="61.75" height="26" fill="#000" />
<g transform="translate(0,658.80) scale(1,1.07) translate(0,-658.80)">
<text x="1833.5" y="658.8" font-family="Liberation Serif" font-size="22.5" fill="#ffffff" font-weight="normal" text-anchor="start" >-23dB</text>
</g>
<rect x="1831.5" y="661" width="61.75" height="26" fill="#000" />
<g transform="translate(0,683.84) scale(1,1.07) translate(0,-683.84)">
<text x="1833.5" y="683.8399999999999" font-family="Liberation Serif" font-size="22.5" fill="#ffffff" font-weight="normal" text-anchor="start" >-25dB</text>
</g>
<rect x="1831.5" y="686" width="61.75" height="26" fill="#000" />
<g transform="translate(0,708.88) scale(1,1.07) translate(0,-708.88)">
<text x="1833.5" y="708.88" font-family="Liberation Serif" font-size="22.5" fill="#ffffff" font-weight="normal" text-anchor="start" >-27dB</text>
</g>
<rect x="1831.5" y="711" width="61.75" height="26" fill="#000" />
<g transform="translate(0,733.92) scale(1,1.07) translate(0,-733.92)">
<text x="1833.5" y="733.92" font-family="Liberation Serif" font-size="22.5" fill="#ffffff" font-weight="normal" text-anchor="start" >-29dB</text>
</g>
<rect x="1831.5" y="736" width="61.75" height="26" fill="#000" />
<g transform="translate(0,758.96) scale(1,1.07) translate(0,-758.96)">
<text x="1833.5" y="758.96" font-family="Liberation Serif" font-size="22.5" fill="#ffffff" font-weight="normal" text-anchor="start" >-31dB</text>
</g>
<rect x="621" y="791" width="54" height="26" fill="#000" />
<g transform="translate(0,813) scale(1,1.07) translate(0,-813)">
<text x="624" y="813" font-family="Liberation Serif" font-size="22.5" fill="#ffffff" font-weight="normal" text-anchor="start" >10Hz</text>
</g>
<rect x="900" y="791" width="54" height="26" fill="#000" />
<g transform="translate(0,813) scale(1,1.07) translate(0,-813)">
<text x="903" y="813" font-family="Liberation Serif" font-size="22.5" fill="#ffffff" font-weight="normal" text-anchor="start" >30Hz</text>
</g>
<rect x="1049" y="791" width="54" height="26" fill="#000" />
<g transform="translate(0,813) scale(1,1.07) translate(0,-813)">
<text x="1052" y="813" font-family="Liberation Serif" font-size="22.5" fill="#ffffff" font-weight="normal" text-anchor="start" >50Hz</text>
</g>
<rect x="1234.5" y="791" width="66" height="26" fill="#000" />
<g transform="translate(0,813) scale(1,1.07) translate(0,-813)">
<text x="1237.5" y="813" font-family="Liberation Serif" font-size="22.5" fill="#ffffff" font-weight="normal" text-anchor="start" >100Hz</text>
</g>
<rect x="1531" y="791" width="66" height="26" fill="#000" />
<g transform="translate(0,813) scale(1,1.07) translate(0,-813)">
<text x="1534" y="813" font-family="Liberation Serif" font-size="22.5" fill="#ffffff" font-weight="normal" text-anchor="start" >300Hz</text>
</g>
<rect x="1680" y="791" width="66" height="26" fill="#000" />
<g transform="translate(0,813) scale(1,1.07) translate(0,-813)">
<text x="1683" y="813" font-family="Liberation Serif" font-size="22.5" fill="#ffffff" font-weight="normal" text-anchor="start" >500Hz</text>
</g>
<rect x="1845" y="791" width="54" height="26" fill="#000" />
<g transform="translate(0,813) scale(1,1.07) translate(0,-813)">
<text x="1848" y="813" font-family="Liberation Serif" font-size="22.5" fill="#ffffff" font-weight="normal" text-anchor="start" >1kHz</text>
</g>
<rect x="621" y="366" width="1280" height="2" fill="#ff0000" />
<path d="M621.0,618.2 L623.0,616.6 L625.0,615.1 L627.0,613.5 L629.0,612.0 L631.0,610.5 L633.0,608.9 L635.0,607.4 L637.0,605.8 L639.0,604.3 L641.0,602.8 L643.0,601.2 L645.0,599.7 L647.0,598.1 L649.0,596.6 L651.0,595.1 L653.0,593.5 L655.0,592.0 L657.0,590.5 L659.0,588.9 L661.0,587.4 L663.0,585.9 L665.0,584.3 L667.0,582.8 L669.0,581.3 L671.0,579.8 L673.0,578.2 L675.0,576.7 L677.0,575.2 L679.0,573.7 L681.0,572.2 L683.0,570.6 L685.0,569.1 L687.0,567.6 L689.0,566.1 L691.0,564.6 L693.0,563.1 L695.0,561.5 L697.0,560.0 L699.0,558.5 L701.0,557.0 L703.0,555.5 L705.0,554.0 L707.0,552.5 L709.0,551.0 L711.0,549.5 L713.0,548.0 L715.0,546.5 L717.0,545.0 L719.0,543.5 L721.0,542.0 L723.0,540.5 L725.0,539.0 L727.0,537.6 L729.0,536.1 L731.0,534.6 L733.0,533.1 L735.0,531.6 L737.0,530.2 L739.0,528.7 L741.0,527.2 L743.0,525.8 L745.0,524.3 L747.0,522.8 L749.0,521.4 L751.0,519.9 L753.0,518.5 L755.0,517.0 L757.0,515.6 L759.0,514.1 L761.0,512.7 L763.0,511.2 L765.0,509.8 L767.0,508.4 L769.0,506.9 L771.0,505.5 L773.0,504.1 L775.0,502.7 L777.0,501.2 L779.0,499.8 L781.0,498.4 L783.0,497.0 L785.0,495.6 L787.0,494.2 L789.0,492.8 L791.0,491.4 L793.0,490.0 L795.0,488.7 L797.0,487.3 L799.0,485.9 L801.0,484.5 L803.0,483.2 L805.0,481.8 L807.0,480.5 L809.0,479.1 L811.0,477.8 L813.0,476.4 L815.0,475.1 L817.0,473.8 L819.0,472.5 L821.0,471.2 L823.0,469.8 L825.0,468.5 L827.0,467.2 L829.0,465.9 L831.0,464.7 L833.0,463.4 L835.0,462.1 L837.0,460.8 L839.0,459.6 L841.0,458.3 L843.0,457.1 L845.0,455.8 L847.0,454.6 L849.0,453.4 L851.0,452.2 L853.0,451.0 L855.0,449.8 L857.0,448.6 L859.0,447.4 L861.0,446.2 L863.0,445.0 L865.0,443.9 L867.0,442.7 L869.0,441.6 L871.0,440.4 L873.0,439.3 L875.0,438.2 L877.0,437.1 L879.0,436.0 L881.0,434.9 L883.0,433.8 L885.0,432.7 L887.0,431.6 L889.0,430.6 L891.0,429.5 L893.0,428.5 L895.0,427.5 L897.0,426.5 L899.0,425.4 L901.0,424.5 L903.0,423.5 L905.0,422.5 L907.0,421.5 L909.0,420.6 L911.0,419.6 L913.0,418.7 L915.0,417.7 L917.0,416.8 L919.0,415.9 L921.0,415.0 L923.0,414.1 L925.0,413.3 L927.0,412.4 L929.0,411.5 L931.0,410.7 L933.0,409.9 L935.0,409.0 L937.0,408.2 L939.0,407.4 L941.0,406.6 L943.0,405.9 L945.0,405.1 L947.0,404.3 L949.0,403.6 L951.0,402.9 L953.0,402.1 L955.0,401.4 L957.0,400.7 L959.0,400.0 L961.0,399.3 L963.0,398.7 L965.0,398.0 L967.0,397.4 L969.0,396.7 L971.0,396.1 L973.0,395.5 L975.0,394.9 L977.0,394.3 L979.0,393.7 L981.0,393.1 L983.0,392.5 L985.0,392.0 L987.0,391.4 L989.0,390.9 L991.0,390.3 L993.0,389.8 L995.0,389.3 L997.0,388.8 L999.0,388.3 L1001.0,387.8 L1003.0,387.3 L1005.0,386.9 L1007.0,386.4 L1009.0,386.0 L1011.0,385.5 L1013.0,385.1 L1015.0,384.7 L1017.0,384.3 L1019.0,383.9 L1021.0,383.5 L1023.0,383.1 L1025.0,382.7 L1027.0,382.3 L1029.0,382.0 L1031.0,381.6 L1033.0,381.3 L1035.0,380.9 L1037.0,380.6 L1039.0,380.2 L1041.0,379.9 L1043.0,379.6 L1045.0,379.3 L1047.0,379.0 L1049.0,378.7 L1051.0,378.4 L1053.0,378.1 L1055.0,377.9 L1057.0,377.6 L1059.0,377.3 L1061.0,377.1 L1063.0,376.8 L1065.0,376.6 L1067.0,376.3 L1069.0,376.1 L1071.0,375.9 L1073.0,375.6 L1075.0,375.4 L1077.0,375.2 L1079.0,375.0 L1081.0,374.8 L1083.0,374.6 L1085.0,374.4 L1087.0,374.2 L1089.0,374.0 L1091.0,373.8 L1093.0,373.6 L1095.0,373.5 L1097.0,373.3 L1099.0,373.1 L1101.0,373.0 L1103.0,372.8 L1105.0,372.7 L1107.0,372.5 L1109.0,372.4 L1111.0,372.2 L1113.0,372.1 L1115.0,371.9 L1117.0,371.8 L1119.0,371.7 L1121.0,371.5 L1123.0,371.4 L1125.0,371.3 L1127.0,371.2 L1129.0,371.1 L1131.0,371.0 L1133.0,370.8 L1135.0,370.7 L1137.0,370.6 L1139.0,370.5 L1141.0,370.4 L1143.0,370.3 L1145.0,370.2 L1147.0,370.1 L1149.0,370.1 L1151.0,370.0 L1153.0,369.9 L1155.0,369.8 L1157.0,369.7 L1159.0,369.6 L1161.0,369.6 L1163.0,369.5 L1165.0,369.4 L1167.0,369.3 L1169.0,369.3 L1171.0,369.2 L1173.0,369.1 L1175.0,369.1 L1177.0,369.0 L1179.0,368.9 L1181.0,368.9 L1183.0,368.8 L1185.0,368.8 L1187.0,368.7 L1189.0,368.6 L1191.0,368.6 L1193.0,368.5 L1195.0,368.5 L1197.0,368.4 L1199.0,368.4 L1201.0,368.3 L1203.0,368.3 L1205.0,368.3 L1207.0,368.2 L1209.0,368.2 L1211.0,368.1 L1213.0,368.1 L1215.0,368.0 L1217.0,368.0 L1219.0,368.0 L1221.0,367.9 L1223.0,367.9 L1225.0,367.9 L1227.0,367.8 L1229.0,367.8 L1231.0,367.8 L1233.0,367.7 L1235.0,367.7 L1237.0,367.7 L1239.0,367.6 L1241.0,367.6 L1243.0,367.6 L1245.0,367.5 L1247.0,367.5 L1249.0,367.5 L1251.0,367.5 L1253.0,367.4 L1255.0,367.4 L1257.0,367.4 L1259.0,367.4 L1261.0,367.3 L1263.0,367.3 L1265.0,367.3 L1267.0,367.3 L1269.0,367.3 L1271.0,367.2 L1273.0,367.2 L1275.0,367.2 L1277.0,367.2 L1279.0,367.2 L1281.0,367.1 L1283.0,367.1 L1285.0,367.1 L1287.0,367.1" fill="none" stroke="#ff0000" stroke-width="2" shape-rendering="crispEdges"/>
<path d="M621.0,750.1 L623.0,747.0 L625.0,744.0 L627.0,741.0 L629.0,738.0 L631.0,734.9 L633.0,731.9 L635.0,728.9 L637.0,725.9 L639.0,722.9 L641.0,719.9 L643.0,716.9 L645.0,713.9 L647.0,710.9 L649.0,707.9 L651.0,704.9 L653.0,701.9 L655.0,698.9 L657.0,695.9 L659.0,693.0 L661.0,690.0 L663.0,687.0 L665.0,684.0 L667.0,681.1 L669.0,678.1 L671.0,675.2 L673.0,672.2 L675.0,669.3 L677.0,666.3 L679.0,663.4 L681.0,660.4 L683.0,657.5 L685.0,654.6 L687.0,651.7 L689.0,648.7 L691.0,645.8 L693.0,642.9 L695.0,640.0 L697.0,637.1 L699.0,634.2 L701.0,631.3 L703.0,628.4 L705.0,625.6 L707.0,622.7 L709.0,619.8 L711.0,617.0 L713.0,614.1 L715.0,611.3 L717.0,608.4 L719.0,605.6 L721.0,602.8 L723.0,599.9 L725.0,597.1 L727.0,594.3 L729.0,591.5 L731.0,588.7 L733.0,585.9 L735.0,583.2 L737.0,580.4 L739.0,577.6 L741.0,574.9 L743.0,572.1 L745.0,569.4 L747.0,566.7 L749.0,564.0 L751.0,561.2 L753.0,558.5 L755.0,555.8 L757.0,553.2 L759.0,550.5 L761.0,547.8 L763.0,545.2 L765.0,542.5 L767.0,539.9 L769.0,537.3 L771.0,534.7 L773.0,532.1 L775.0,529.5 L777.0,526.9 L779.0,524.4 L781.0,521.8 L783.0,519.3 L785.0,516.8 L787.0,514.3 L789.0,511.8 L791.0,509.3 L793.0,506.8 L795.0,504.4 L797.0,501.9 L799.0,499.5 L801.0,497.1 L803.0,494.7 L805.0,492.3 L807.0,490.0 L809.0,487.7 L811.0,485.3 L813.0,483.0 L815.0,480.7 L817.0,478.5 L819.0,476.2 L821.0,474.0 L823.0,471.8 L825.0,469.6 L827.0,467.4 L829.0,465.2 L831.0,463.1 L833.0,461.0 L835.0,458.9 L837.0,456.8 L839.0,454.8 L841.0,452.7 L843.0,450.7 L845.0,448.8 L847.0,446.8 L849.0,444.9 L851.0,443.0 L853.0,441.1 L855.0,439.2 L857.0,437.4 L859.0,435.6 L861.0,433.8 L863.0,432.0 L865.0,430.3 L867.0,428.6 L869.0,426.9 L871.0,425.2 L873.0,423.6 L875.0,422.0 L877.0,420.4 L879.0,418.9 L881.0,417.3 L883.0,415.8 L885.0,414.4 L887.0,412.9 L889.0,411.5 L891.0,410.1 L893.0,408.8 L895.0,407.4 L897.0,406.1 L899.0,404.9 L901.0,403.6 L903.0,402.4 L905.0,401.2 L907.0,400.0 L909.0,398.9 L911.0,397.8 L913.0,396.7 L915.0,395.6 L917.0,394.6 L919.0,393.6 L921.0,392.6 L923.0,391.7 L925.0,390.7 L927.0,389.8 L929.0,389.0 L931.0,388.1 L933.0,387.3 L935.0,386.5 L937.0,385.7 L939.0,384.9 L941.0,384.2 L943.0,383.5 L945.0,382.8 L947.0,382.1 L949.0,381.4 L951.0,380.8 L953.0,380.2 L955.0,379.6 L957.0,379.0 L959.0,378.5 L961.0,377.9 L963.0,377.4 L965.0,376.9 L967.0,376.4 L969.0,376.0 L971.0,375.5 L973.0,375.1 L975.0,374.7 L977.0,374.3 L979.0,373.9 L981.0,373.5 L983.0,373.2 L985.0,372.8 L987.0,372.5 L989.0,372.2 L991.0,371.8 L993.0,371.6 L995.0,371.3 L997.0,371.0 L999.0,370.7 L1001.0,370.5 L1003.0,370.2 L1005.0,370.0 L1007.0,369.8 L1009.0,369.6 L1011.0,369.4 L1013.0,369.2 L1015.0,369.0 L1017.0,368.8 L1019.0,368.7 L1021.0,368.5 L1023.0,368.4 L1025.0,368.2 L1027.0,368.1 L1029.0,367.9 L1031.0,367.8 L1033.0,367.7 L1035.0,367.6 L1037.0,367.5 L1039.0,367.4 L1041.0,367.3 L1043.0,367.2 L1045.0,367.1 L1047.0,367.0 L1049.0,366.9 L1051.0,366.9 L1053.0,366.8 L1055.0,366.7 L1057.0,366.7 L1059.0,366.6 L1061.0,366.6 L1063.0,366.5 L1065.0,366.5 L1067.0,366.4 L1069.0,366.4 L1071.0,366.4 L1073.0,366.3 L1075.0,366.3 L1077.0,366.3 L1079.0,366.2 L1081.0,366.2 L1083.0,366.2 L1085.0,366.2 L1087.0,366.2 L1089.0,366.1 L1091.0,366.1 L1093.0,366.1 L1095.0,366.1 L1097.0,366.1 L1099.0,366.1 L1101.0,366.1 L1103.0,366.1 L1105.0,366.1 L1107.0,366.1 L1109.0,366.1 L1111.0,366.1 L1113.0,366.1 L1115.0,366.1 L1117.0,366.1 L1119.0,366.1 L1121.0,366.1 L1123.0,366.2 L1125.0,366.2 L1127.0,366.2 L1129.0,366.2 L1131.0,366.2 L1133.0,366.2 L1135.0,366.2 L1137.0,366.2 L1139.0,366.3 L1141.0,366.3 L1143.0,366.3 L1145.0,366.3 L1147.0,366.3 L1149.0,366.3 L1151.0,366.4 L1153.0,366.4 L1155.0,366.4 L1157.0,366.4 L1159.0,366.4 L1161.0,366.5 L1163.0,366.5 L1165.0,366.5 L1167.0,366.5 L1169.0,366.5 L1171.0,366.6 L1173.0,366.6 L1175.0,366.6 L1177.0,366.6 L1179.0,366.7 L1181.0,366.7 L1183.0,366.7 L1185.0,366.7 L1187.0,366.7 L1189.0,366.8 L1191.0,366.8 L1193.0,366.8 L1195.0,366.8 L1197.0,366.9 L1199.0,366.9 L1201.0,366.9 L1203.0,366.9 L1205.0,366.9 L1207.0,367.0 L1209.0,367.0 L1211.0,367.0 L1213.0,367.0 L1215.0,367.1 L1217.0,367.1 L1219.0,367.1 L1221.0,367.1 L1223.0,367.1 L1225.0,367.2 L1227.0,367.2 L1229.0,367.2 L1231.0,367.2 L1233.0,367.3 L1235.0,367.3 L1237.0,367.3 L1239.0,367.3 L1241.0,367.3 L1243.0,367.4 L1245.0,367.4 L1247.0,367.4 L1249.0,367.4 L1251.0,367.4 L1253.0,367.5 L1255.0,367.5 L1257.0,367.5 L1259.0,367.5 L1261.0,367.5 L1263.0,367.6 L1265.0,367.6 L1267.0,367.6 L1269.0,367.6 L1271.0,367.6 L1273.0,367.7 L1275.0,367.7 L1277.0,367.7 L1279.0,367.7 L1281.0,367.7 L1283.0,367.7 L1285.0,367.8 L1287.0,367.8" fill="none" stroke="#00ff00" stroke-width="2" shape-rendering="crispEdges"/>
<path d="M621.0,593.9 L623.0,592.3 L625.0,590.8 L627.0,589.2 L629.0,587.6 L631.0,586.0 L633.0,584.4 L635.0,582.8 L637.0,581.3 L639.0,579.7 L641.0,578.1 L643.0,576.5 L645.0,574.9 L647.0,573.4 L649.0,571.8 L651.0,570.2 L653.0,568.6 L655.0,567.0 L657.0,565.5 L659.0,563.9 L661.0,562.3 L663.0,560.7 L665.0,559.2 L667.0,557.6 L669.0,556.0 L671.0,554.4 L673.0,552.9 L675.0,551.3 L677.0,549.7 L679.0,548.1 L681.0,546.6 L683.0,545.0 L685.0,543.4 L687.0,541.9 L689.0,540.3 L691.0,538.7 L693.0,537.2 L695.0,535.6 L697.0,534.0 L699.0,532.5 L701.0,530.9 L703.0,529.3 L705.0,527.8 L707.0,526.2 L709.0,524.7 L711.0,523.1 L713.0,521.6 L715.0,520.0 L717.0,518.5 L719.0,516.9 L721.0,515.4 L723.0,513.8 L725.0,512.3 L727.0,510.7 L729.0,509.2 L731.0,507.6 L733.0,506.1 L735.0,504.6 L737.0,503.0 L739.0,501.5 L741.0,500.0 L743.0,498.5 L745.0,496.9 L747.0,495.4 L749.0,493.9 L751.0,492.4 L753.0,490.9 L755.0,489.4 L757.0,487.9 L759.0,486.4 L761.0,484.9 L763.0,483.4 L765.0,481.9 L767.0,480.4 L769.0,478.9 L771.0,477.5 L773.0,476.0 L775.0,474.5 L777.0,473.1 L779.0,471.6 L781.0,470.1 L783.0,468.7 L785.0,467.2 L787.0,465.8 L789.0,464.4 L791.0,462.9 L793.0,461.5 L795.0,460.1 L797.0,458.7 L799.0,457.3 L801.0,455.9 L803.0,454.5 L805.0,453.1 L807.0,451.7 L809.0,450.4 L811.0,449.0 L813.0,447.6 L815.0,446.3 L817.0,444.9 L819.0,443.6 L821.0,442.3 L823.0,440.9 L825.0,439.6 L827.0,438.3 L829.0,437.0 L831.0,435.8 L833.0,434.5 L835.0,433.2 L837.0,432.0 L839.0,430.7 L841.0,429.5 L843.0,428.2 L845.0,427.0 L847.0,425.8 L849.0,424.6 L851.0,423.4 L853.0,422.2 L855.0,421.1 L857.0,419.9 L859.0,418.8 L861.0,417.7 L863.0,416.5 L865.0,415.4 L867.0,414.3 L869.0,413.3 L871.0,412.2 L873.0,411.1 L875.0,410.1 L877.0,409.1 L879.0,408.0 L881.0,407.0 L883.0,406.0 L885.0,405.1 L887.0,404.1 L889.0,403.1 L891.0,402.2 L893.0,401.3 L895.0,400.4 L897.0,399.5 L899.0,398.6 L901.0,397.7 L903.0,396.9 L905.0,396.0 L907.0,395.2 L909.0,394.4 L911.0,393.6 L913.0,392.8 L915.0,392.0 L917.0,391.3 L919.0,390.5 L921.0,389.8 L923.0,389.1 L925.0,388.4 L927.0,387.7 L929.0,387.0 L931.0,386.4 L933.0,385.7 L935.0,385.1 L937.0,384.5 L939.0,383.9 L941.0,383.3 L943.0,382.7 L945.0,382.1 L947.0,381.6 L949.0,381.0 L951.0,380.5 L953.0,380.0 L955.0,379.5 L957.0,379.0 L959.0,378.5 L961.0,378.1 L963.0,377.6 L965.0,377.2 L967.0,376.7 L969.0,376.3 L971.0,375.9 L973.0,375.5 L975.0,375.1 L977.0,374.8 L979.0,374.4 L981.0,374.1 L983.0,373.7 L985.0,373.4 L987.0,373.1 L989.0,372.7 L991.0,372.4 L993.0,372.2 L995.0,371.9 L997.0,371.6 L999.0,371.3 L1001.0,371.1 L1003.0,370.8 L1005.0,370.6 L1007.0,370.3 L1009.0,370.1 L1011.0,369.9 L1013.0,369.7 L1015.0,369.5 L1017.0,369.3 L1019.0,369.1 L1021.0,368.9 L1023.0,368.8 L1025.0,368.6 L1027.0,368.4 L1029.0,368.3 L1031.0,368.1 L1033.0,368.0 L1035.0,367.8 L1037.0,367.7 L1039.0,367.6 L1041.0,367.4 L1043.0,367.3 L1045.0,367.2 L1047.0,367.1 L1049.0,367.0 L1051.0,366.9 L1053.0,366.8 L1055.0,366.7 L1057.0,366.6 L1059.0,366.5 L1061.0,366.5 L1063.0,366.4 L1065.0,366.3 L1067.0,366.2 L1069.0,366.2 L1071.0,366.1 L1073.0,366.1 L1075.0,366.0 L1077.0,366.0 L1079.0,365.9 L1081.0,365.9 L1083.0,365.8 L1085.0,365.8 L1087.0,365.7 L1089.0,365.7 L1091.0,365.7 L1093.0,365.6 L1095.0,365.6 L1097.0,365.6 L1099.0,365.5 L1101.0,365.5 L1103.0,365.5 L1105.0,365.5 L1107.0,365.5 L1109.0,365.4 L1111.0,365.4 L1113.0,365.4 L1115.0,365.4 L1117.0,365.4 L1119.0,365.4 L1121.0,365.4 L1123.0,365.4 L1125.0,365.4 L1127.0,365.4 L1129.0,365.4 L1131.0,365.3 L1133.0,365.3 L1135.0,365.3 L1137.0,365.3 L1139.0,365.4 L1141.0,365.4 L1143.0,365.4 L1145.0,365.4 L1147.0,365.4 L1149.0,365.4 L1151.0,365.4 L1153.0,365.4 L1155.0,365.4 L1157.0,365.4 L1159.0,365.4 L1161.0,365.4 L1163.0,365.4 L1165.0,365.4 L1167.0,365.5 L1169.0,365.5 L1171.0,365.5 L1173.0,365.5 L1175.0,365.5 L1177.0,365.5 L1179.0,365.5 L1181.0,365.5 L1183.0,365.6 L1185.0,365.6 L1187.0,365.6 L1189.0,365.6 L1191.0,365.6 L1193.0,365.6 L1195.0,365.6 L1197.0,365.7 L1199.0,365.7 L1201.0,365.7 L1203.0,365.7 L1205.0,365.7 L1207.0,365.7 L1209.0,365.8 L1211.0,365.8 L1213.0,365.8 L1215.0,365.8 L1217.0,365.8 L1219.0,365.8 L1221.0,365.8 L1223.0,365.9 L1225.0,365.9 L1227.0,365.9 L1229.0,365.9 L1231.0,365.9 L1233.0,365.9 L1235.0,366.0 L1237.0,366.0 L1239.0,366.0 L1241.0,366.0 L1243.0,366.0 L1245.0,366.0 L1247.0,366.1 L1249.0,366.1 L1251.0,366.1 L1253.0,366.1 L1255.0,366.1 L1257.0,366.1 L1259.0,366.2 L1261.0,366.2 L1263.0,366.2 L1265.0,366.2 L1267.0,366.2 L1269.0,366.2 L1271.0,366.3 L1273.0,366.3 L1275.0,366.3 L1277.0,366.3 L1279.0,366.3 L1281.0,366.3 L1283.0,366.3 L1285.0,366.4 L1287.0,366.4" fill="none" stroke="#ffffff" stroke-width="2" shape-rendering="crispEdges"/>
<path d="M621.0,571.9 L623.0,570.3 L625.0,568.7 L627.0,567.1 L629.0,565.5 L631.0,563.9 L633.0,562.3 L635.0,560.7 L637.0,559.0 L639.0,557.4 L641.0,555.8 L643.0,554.2 L645.0,552.6 L647.0,551.0 L649.0,549.4 L651.0,547.8 L653.0,546.2 L655.0,544.6 L657.0,543.0 L659.0,541.4 L661.0,539.8 L663.0,538.2 L665.0,536.6 L667.0,535.0 L669.0,533.4 L671.0,531.8 L673.0,530.2 L675.0,528.6 L677.0,527.0 L679.0,525.4 L681.0,523.8 L683.0,522.2 L685.0,520.6 L687.0,519.0 L689.0,517.4 L691.0,515.8 L693.0,514.2 L695.0,512.6 L697.0,511.0 L699.0,509.5 L701.0,507.9 L703.0,506.3 L705.0,504.7 L707.0,503.1 L709.0,501.5 L711.0,500.0 L713.0,498.4 L715.0,496.8 L717.0,495.2 L719.0,493.7 L721.0,492.1 L723.0,490.5 L725.0,489.0 L727.0,487.4 L729.0,485.8 L731.0,484.3 L733.0,482.7 L735.0,481.2 L737.0,479.6 L739.0,478.1 L741.0,476.5 L743.0,475.0 L745.0,473.5 L747.0,471.9 L749.0,470.4 L751.0,468.9 L753.0,467.4 L755.0,465.9 L757.0,464.3 L759.0,462.8 L761.0,461.3 L763.0,459.8 L765.0,458.3 L767.0,456.9 L769.0,455.4 L771.0,453.9 L773.0,452.4 L775.0,451.0 L777.0,449.5 L779.0,448.1 L781.0,446.6 L783.0,445.2 L785.0,443.7 L787.0,442.3 L789.0,440.9 L791.0,439.5 L793.0,438.1 L795.0,436.7 L797.0,435.3 L799.0,433.9 L801.0,432.6 L803.0,431.2 L805.0,429.8 L807.0,428.5 L809.0,427.2 L811.0,425.9 L813.0,424.5 L815.0,423.2 L817.0,421.9 L819.0,420.7 L821.0,419.4 L823.0,418.1 L825.0,416.9 L827.0,415.7 L829.0,414.4 L831.0,413.2 L833.0,412.0 L835.0,410.8 L837.0,409.7 L839.0,408.5 L841.0,407.3 L843.0,406.2 L845.0,405.1 L847.0,404.0 L849.0,402.9 L851.0,401.8 L853.0,400.8 L855.0,399.7 L857.0,398.7 L859.0,397.6 L861.0,396.6 L863.0,395.7 L865.0,394.7 L867.0,393.7 L869.0,392.8 L871.0,391.9 L873.0,390.9 L875.0,390.0 L877.0,389.2 L879.0,388.3 L881.0,387.5 L883.0,386.6 L885.0,385.8 L887.0,385.0 L889.0,384.2 L891.0,383.5 L893.0,382.7 L895.0,382.0 L897.0,381.2 L899.0,380.5 L901.0,379.9 L903.0,379.2 L905.0,378.5 L907.0,377.9 L909.0,377.3 L911.0,376.7 L913.0,376.1 L915.0,375.5 L917.0,374.9 L919.0,374.4 L921.0,373.8 L923.0,373.3 L925.0,372.8 L927.0,372.3 L929.0,371.9 L931.0,371.4 L933.0,371.0 L935.0,370.5 L937.0,370.1 L939.0,369.7 L941.0,369.3 L943.0,368.9 L945.0,368.6 L947.0,368.2 L949.0,367.9 L951.0,367.5 L953.0,367.2 L955.0,366.9 L957.0,366.6 L959.0,366.3 L961.0,366.0 L963.0,365.8 L965.0,365.5 L967.0,365.3 L969.0,365.0 L971.0,364.8 L973.0,364.6 L975.0,364.4 L977.0,364.2 L979.0,364.0 L981.0,363.8 L983.0,363.6 L985.0,363.5 L987.0,363.3 L989.0,363.2 L991.0,363.0 L993.0,362.9 L995.0,362.8 L997.0,362.6 L999.0,362.5 L1001.0,362.4 L1003.0,362.3 L1005.0,362.2 L1007.0,362.1 L1009.0,362.0 L1011.0,362.0 L1013.0,361.9 L1015.0,361.8 L1017.0,361.8 L1019.0,361.7 L1021.0,361.6 L1023.0,361.6 L1025.0,361.5 L1027.0,361.5 L1029.0,361.5 L1031.0,361.4 L1033.0,361.4 L1035.0,361.4 L1037.0,361.3 L1039.0,361.3 L1041.0,361.3 L1043.0,361.3 L1045.0,361.3 L1047.0,361.3 L1049.0,361.3 L1051.0,361.2 L1053.0,361.2 L1055.0,361.2 L1057.0,361.2 L1059.0,361.3 L1061.0,361.3 L1063.0,361.3 L1065.0,361.3 L1067.0,361.3 L1069.0,361.3 L1071.0,361.3 L1073.0,361.3 L1075.0,361.4 L1077.0,361.4 L1079.0,361.4 L1081.0,361.4 L1083.0,361.4 L1085.0,361.5 L1087.0,361.5 L1089.0,361.5 L1091.0,361.5 L1093.0,361.6 L1095.0,361.6 L1097.0,361.6 L1099.0,361.7 L1101.0,361.7 L1103.0,361.7 L1105.0,361.8 L1107.0,361.8 L1109.0,361.8 L1111.0,361.9 L1113.0,361.9 L1115.0,361.9 L1117.0,362.0 L1119.0,362.0 L1121.0,362.0 L1123.0,362.1 L1125.0,362.1 L1127.0,362.2 L1129.0,362.2 L1131.0,362.2 L1133.0,362.3 L1135.0,362.3 L1137.0,362.3 L1139.0,362.4 L1141.0,362.4 L1143.0,362.5 L1145.0,362.5 L1147.0,362.5 L1149.0,362.6 L1151.0,362.6 L1153.0,362.7 L1155.0,362.7 L1157.0,362.7 L1159.0,362.8 L1161.0,362.8 L1163.0,362.8 L1165.0,362.9 L1167.0,362.9 L1169.0,363.0 L1171.0,363.0 L1173.0,363.0 L1175.0,363.1 L1177.0,363.1 L1179.0,363.1 L1181.0,363.2 L1183.0,363.2 L1185.0,363.3 L1187.0,363.3 L1189.0,363.3 L1191.0,363.4 L1193.0,363.4 L1195.0,363.4 L1197.0,363.5 L1199.0,363.5 L1201.0,363.5 L1203.0,363.6 L1205.0,363.6 L1207.0,363.6 L1209.0,363.7 L1211.0,363.7 L1213.0,363.7 L1215.0,363.8 L1217.0,363.8 L1219.0,363.8 L1221.0,363.9 L1223.0,363.9 L1225.0,363.9 L1227.0,364.0 L1229.0,364.0 L1231.0,364.0 L1233.0,364.1 L1235.0,364.1 L1237.0,364.1 L1239.0,364.1 L1241.0,364.2 L1243.0,364.2 L1245.0,364.2 L1247.0,364.3 L1249.0,364.3 L1251.0,364.3 L1253.0,364.3 L1255.0,364.4 L1257.0,364.4 L1259.0,364.4 L1261.0,364.4 L1263.0,364.5 L1265.0,364.5 L1267.0,364.5 L1269.0,364.6 L1271.0,364.6 L1273.0,364.6 L1275.0,364.6 L1277.0,364.7 L1279.0,364.7 L1281.0,364.7 L1283.0,364.7 L1285.0,364.7 L1287.0,364.8 L1289.0,364.8 L1291.0,364.8 L1293.0,364.8 L1295.0,364.9 L1297.0,364.9 L1299.0,364.9 L1301.0,364.9 L1303.0,364.9 L1305.0,365.0 L1307.0,365.0 L1309.0,365.0 L1311.0,365.0 L1313.0,365.0 L1315.0,365.1 L1317.0,365.1 L1319.0,365.1 L1321.0,365.1 L1323.0,365.1 L1325.0,365.2 L1327.0,365.2" fill="none" stroke="#0000ff" stroke-width="2" shape-rendering="crispEdges"/>
<g shape-rendering="crispEdges">
<rect x="621" y="439" width="1280" height="2" fill="#ffffff" />
<rect x="855" y="255" width="2" height="562" fill="#ffffff" />
</g>
<path d="M6,1331 V1287.2 Q6,1281.2 12,1281.2 H296 Q302,1281.2 302,1287.2 V1331 Z" fill="#3a3a3a"/>
<path d="M7,1330.5 V1287.2 Q7,1282.2 12,1282.2 H296 Q301,1282.2 301,1287.2 V1330.5 Z" fill="#f4f8fc"/>
<path d="M8,1329.5 V1288.2 Q8,1283.2 13,1283.2 H295 Q300,1283.2 300,1288.2 V1329.5 Z" fill="url(#tbMin)"/>
<use href="#appicon" transform="translate(15,1296) scale(0.98)"/>
<text x="51" y="1320" font-family="Liberation Sans" font-size="22" fill="#a39fa6" font-weight="normal" text-anchor="start" textLength="42" lengthAdjust="spacingAndGlyphs" >[3]...</text>
<rect x="108.0" y="1291.5" width="57.5" height="31.5" rx="3" fill="url(#btnInact)" stroke="#5c6f8c" stroke-width="1"/>
<rect x="109.0" y="1292.5" width="55.5" height="29.5" rx="2" fill="none" stroke="#ffffff" stroke-opacity="0.55" stroke-width="1"/>
<rect x="132.75" y="1296.55" width="13" height="11" fill="#e4e4e4" stroke="#3c4658" stroke-width="1.4"/>
<rect x="135.75" y="1299.55" width="6" height="3" fill="#a8c4e0" stroke="#3c4658" stroke-width="1"/>
<rect x="126.75" y="1302.55" width="13" height="11" fill="#e4e4e4" stroke="#3c4658" stroke-width="1.4"/>
<rect x="129.75" y="1305.55" width="6" height="3" fill="#a8c4e0" stroke="#3c4658" stroke-width="1"/>
<rect x="172.0" y="1291.5" width="57" height="31.5" rx="3" fill="url(#btnInact)" stroke="#5c6f8c" stroke-width="1"/>
<rect x="173.0" y="1292.5" width="55" height="29.5" rx="2" fill="none" stroke="#ffffff" stroke-opacity="0.55" stroke-width="1"/>
<rect x="191.5" y="1298.55" width="18" height="15" rx="1" fill="#e4e4e4" stroke="#3c4658" stroke-width="1.6"/>
<rect x="196.0" y="1303.05" width="9" height="4.5" fill="#a8c4e0" stroke="#3c4658" stroke-width="1.4"/>
<rect x="235.5" y="1291.5" width="57.5" height="31.5" rx="3" fill="url(#btnInact)" stroke="#5c6f8c" stroke-width="1"/>
<rect x="236.5" y="1292.5" width="55.5" height="29.5" rx="2" fill="none" stroke="#ffffff" stroke-opacity="0.55" stroke-width="1"/>
<path d="M257.75,1301.05 L270.75,1311.05 M270.75,1301.05 L257.75,1311.05" stroke="#3c4658" stroke-width="6.8" stroke-linecap="square"/>
<path d="M257.75,1301.05 L270.75,1311.05 M270.75,1301.05 L257.75,1311.05" stroke="#f4f4f4" stroke-width="3.8" stroke-linecap="square"/>
<path d="M306,1331 V1287.2 Q306,1281.2 312,1281.2 H596 Q602,1281.2 602,1287.2 V1331 Z" fill="#3a3a3a"/>
<path d="M307,1330.5 V1287.2 Q307,1282.2 312,1282.2 H596 Q601,1282.2 601,1287.2 V1330.5 Z" fill="#f4f8fc"/>
<path d="M308,1329.5 V1288.2 Q308,1283.2 313,1283.2 H595 Q600,1283.2 600,1288.2 V1329.5 Z" fill="url(#tbMin)"/>
<use href="#appicon" transform="translate(315,1296) scale(0.98)"/>
<text x="351" y="1320" font-family="Liberation Sans" font-size="22" fill="#a39fa6" font-weight="normal" text-anchor="start" textLength="42" lengthAdjust="spacingAndGlyphs" >[5]...</text>
<rect x="408.0" y="1291.5" width="57.5" height="31.5" rx="3" fill="url(#btnInact)" stroke="#5c6f8c" stroke-width="1"/>
<rect x="409.0" y="1292.5" width="55.5" height="29.5" rx="2" fill="none" stroke="#ffffff" stroke-opacity="0.55" stroke-width="1"/>
<rect x="432.75" y="1296.55" width="13" height="11" fill="#e4e4e4" stroke="#3c4658" stroke-width="1.4"/>
<rect x="435.75" y="1299.55" width="6" height="3" fill="#a8c4e0" stroke="#3c4658" stroke-width="1"/>
<rect x="426.75" y="1302.55" width="13" height="11" fill="#e4e4e4" stroke="#3c4658" stroke-width="1.4"/>
<rect x="429.75" y="1305.55" width="6" height="3" fill="#a8c4e0" stroke="#3c4658" stroke-width="1"/>
<rect x="472.0" y="1291.5" width="57" height="31.5" rx="3" fill="url(#btnInact)" stroke="#5c6f8c" stroke-width="1"/>
<rect x="473.0" y="1292.5" width="55" height="29.5" rx="2" fill="none" stroke="#ffffff" stroke-opacity="0.55" stroke-width="1"/>
<rect x="491.5" y="1298.55" width="18" height="15" rx="1" fill="#e4e4e4" stroke="#3c4658" stroke-width="1.6"/>
<rect x="496.0" y="1303.05" width="9" height="4.5" fill="#a8c4e0" stroke="#3c4658" stroke-width="1.4"/>
<rect x="535.5" y="1291.5" width="57.5" height="31.5" rx="3" fill="url(#btnInact)" stroke="#5c6f8c" stroke-width="1"/>
<rect x="536.5" y="1292.5" width="55.5" height="29.5" rx="2" fill="none" stroke="#ffffff" stroke-opacity="0.55" stroke-width="1"/>
<path d="M557.75,1301.05 L570.75,1311.05 M570.75,1301.05 L557.75,1311.05" stroke="#3c4658" stroke-width="6.8" stroke-linecap="square"/>
<path d="M557.75,1301.05 L570.75,1311.05 M570.75,1301.05 L557.75,1311.05" stroke="#f4f4f4" stroke-width="3.8" stroke-linecap="square"/>
<path d="M606,1331 V1287.2 Q606,1281.2 612,1281.2 H896 Q902,1281.2 902,1287.2 V1331 Z" fill="#3a3a3a"/>
<path d="M607,1330.5 V1287.2 Q607,1282.2 612,1282.2 H896 Q901,1282.2 901,1287.2 V1330.5 Z" fill="#f4f8fc"/>
<path d="M608,1329.5 V1288.2 Q608,1283.2 613,1283.2 H895 Q900,1283.2 900,1288.2 V1329.5 Z" fill="url(#tbMin)"/>
<use href="#appicon" transform="translate(615,1296) scale(0.98)"/>
<text x="651" y="1320" font-family="Liberation Sans" font-size="22" fill="#a39fa6" font-weight="normal" text-anchor="start" textLength="42" lengthAdjust="spacingAndGlyphs" >[4]...</text>
<rect x="708.0" y="1291.5" width="57.5" height="31.5" rx="3" fill="url(#btnInact)" stroke="#5c6f8c" stroke-width="1"/>
<rect x="709.0" y="1292.5" width="55.5" height="29.5" rx="2" fill="none" stroke="#ffffff" stroke-opacity="0.55" stroke-width="1"/>
<rect x="732.75" y="1296.55" width="13" height="11" fill="#e4e4e4" stroke="#3c4658" stroke-width="1.4"/>
<rect x="735.75" y="1299.55" width="6" height="3" fill="#a8c4e0" stroke="#3c4658" stroke-width="1"/>
<rect x="726.75" y="1302.55" width="13" height="11" fill="#e4e4e4" stroke="#3c4658" stroke-width="1.4"/>
<rect x="729.75" y="1305.55" width="6" height="3" fill="#a8c4e0" stroke="#3c4658" stroke-width="1"/>
<rect x="772.0" y="1291.5" width="57" height="31.5" rx="3" fill="url(#btnInact)" stroke="#5c6f8c" stroke-width="1"/>
<rect x="773.0" y="1292.5" width="55" height="29.5" rx="2" fill="none" stroke="#ffffff" stroke-opacity="0.55" stroke-width="1"/>
<rect x="791.5" y="1298.55" width="18" height="15" rx="1" fill="#e4e4e4" stroke="#3c4658" stroke-width="1.6"/>
<rect x="796.0" y="1303.05" width="9" height="4.5" fill="#a8c4e0" stroke="#3c4658" stroke-width="1.4"/>
<rect x="835.5" y="1291.5" width="57.5" height="31.5" rx="3" fill="url(#btnInact)" stroke="#5c6f8c" stroke-width="1"/>
<rect x="836.5" y="1292.5" width="55.5" height="29.5" rx="2" fill="none" stroke="#ffffff" stroke-opacity="0.55" stroke-width="1"/>
<path d="M857.75,1301.05 L870.75,1311.05 M870.75,1301.05 L857.75,1311.05" stroke="#3c4658" stroke-width="6.8" stroke-linecap="square"/>
<path d="M857.75,1301.05 L870.75,1311.05 M870.75,1301.05 L857.75,1311.05" stroke="#f4f4f4" stroke-width="3.8" stroke-linecap="square"/>
<rect x="0" y="1384" width="1920" height="56" fill="#05080c" />
<path fill="#fff" d="M19,1399.5 L32.5,1398 V1410.5 H19 Z M34.5,1397.7 L48.7,1396.5 V1410.5 H34.5 Z M19,1412.5 H32.5 V1425 L19,1423.5 Z M34.5,1412.5 H48.7 V1426.5 L34.5,1425.2 Z"/>
<circle cx="101" cy="1411" r="12.3" fill="none" stroke="#fff" stroke-width="3"/>
<g fill="none" stroke="#fff" stroke-width="2"><rect x="158" y="1399" width="22" height="25.5"/><path d="M154,1403 H151 V1420 H154 M184,1403 H187 V1420 H184"/></g>
<path fill="#1d86e0" d="M241,1397 C250,1397 256,1403 255,1413 H235 C236,1419 240,1422 246,1422 C250,1422 253,1421 255,1419.5 V1424.5 C252,1426 249,1427 245,1427 C236,1427 227,1421 227,1411 C227,1402 233,1397 241,1397 Z M235.5,1408 H248 C248,1404 245,1401.5 241.5,1401.5 C238,1401.5 236,1404 235.5,1408 Z"/>
<path fill="#fff" d="M298,1404 H325 V1426 H298 Z"/>
<path fill="none" stroke="#fff" stroke-width="2" d="M305,1404 V1401 Q305,1397.5 309,1397.5 H314 Q318,1397.5 318,1401 V1404"/>
<path fill="#05080c" d="M304,1410 H310.5 V1415 H304 Z M312.5,1410 H319 V1415 H312.5 Z M304,1417 H310.5 V1422 H304 Z M312.5,1417 H319 V1422 H312.5 Z"/>
<path fill="#f0c75e" d="M365,1401 H378 L381,1404 H396 V1425 H365 Z"/>
<path fill="#fbe08a" d="M365,1406 H396 V1425 H365 Z"/>
<path fill="#2a8fe0" d="M372,1414 H389 V1425 H384.5 V1418.5 H376.5 V1425 H372 Z"/>
<path fill="#fff" d="M435.5,1407 L450,1398.5 L465,1407 V1424 H435.5 Z"/>
<path fill="#05080c" d="M438,1407.5 H462.5 L452,1415.5 L455,1418 L450,1416.5 Z"/>
<rect x="508.5" y="1397" width="22.5" height="29.5" fill="#fff" />
<rect x="511" y="1400" width="17.5" height="4" fill="#05080c" />
<rect x="512" y="1407.5" width="3" height="2.5" fill="#05080c" />
<rect x="518" y="1407.5" width="3" height="2.5" fill="#05080c" />
<rect x="524" y="1407.5" width="3" height="2.5" fill="#05080c" />
<rect x="512" y="1412.5" width="3" height="2.5" fill="#05080c" />
<rect x="518" y="1412.5" width="3" height="2.5" fill="#05080c" />
<rect x="524" y="1412.5" width="3" height="2.5" fill="#05080c" />
<rect x="512" y="1417.5" width="3" height="2.5" fill="#05080c" />
<rect x="518" y="1417.5" width="3" height="2.5" fill="#05080c" />
<rect x="524" y="1417.5" width="3" height="2.5" fill="#05080c" />
<rect x="512" y="1422.5" width="3" height="2.5" fill="#05080c" />
<rect x="518" y="1422.5" width="3" height="2.5" fill="#05080c" />
<rect x="524" y="1422.5" width="3" height="2.5" fill="#05080c" />
<path fill="#36a9df" d="M589,1398.5 L602,1411.5 L589,1424.5 L576,1411.5 Z"/>
<path fill="#fff" d="M585.5,1404 V1419 H588.5 V1413 L593,1419 H596.5 L591,1411.5 L596.5,1404 H593 L588.5,1410 V1404 Z"/>
<g fill="#c8c8c8"><rect x="650" y="1409" width="15" height="5"/><rect x="654" y="1404" width="2" height="15"/><rect x="658" y="1404" width="2" height="15"/><rect x="662" y="1406" width="2" height="11"/></g>
<rect x="694" y="1384" width="299.5" height="56" fill="#3b3b3b" />
<rect x="694" y="1436" width="299.5" height="4" fill="#64b964" />
<use href="#appicon" transform="translate(710,1400) scale(1.0)"/>
<text x="747" y="1419.3" font-family="Liberation Sans" font-size="22" fill="#ffffff" font-weight="normal" text-anchor="start" textLength="119" lengthAdjust="spacingAndGlyphs" >WinISD beta</text>
<path d="M1121.5,1416.5 L1132.5,1405.5 L1143.5,1416.5" fill="none" stroke="#fff" stroke-width="2"/>
<ellipse cx="1177" cy="1411.5" rx="11" ry="14" fill="#1b4a96"/>
<path d="M1172,1405 L1182,1415 L1177,1420 V1402 L1182,1407 L1172,1417" fill="none" stroke="#fff" stroke-width="2"/>
<rect x="1207.5" y="1397.5" width="30" height="28.5" fill="#2b2b2b" />
<path d="M1220,1402 L1228.5,1411.5 L1220,1421" fill="none" stroke="#e5a00d" stroke-width="4"/>
<rect x="1252.5" y="1397.5" width="29" height="28.5" fill="#3c3c3c" />
<path d="M1256,1412 Q1266,1400 1279,1404 V1421 Q1266,1424 1256,1412 Z" fill="#76b900"/>
<path d="M1262,1412 Q1268,1406 1274,1410 Q1268,1418 1262,1412 Z" fill="#3c3c3c"/>
<path d="M1300,1416 Q1299,1404 1307,1403 H1318 Q1326,1404 1325,1416 Q1324,1422 1320,1420 L1316,1415 H1309 L1305,1420 Q1301,1422 1300,1416 Z" fill="#f0f0f0"/>
<path d="M1315,1417 L1324,1425 M1324,1417 L1315,1425" stroke="#ff1a1a" stroke-width="3"/>
<path d="M1352,1398 L1347,1412 H1356 M1354,1405 V1421 M1362,1398 V1421" fill="none" stroke="#fff" stroke-width="2"/>
<circle cx="1402" cy="1412" r="9.5" fill="none" stroke="#e8662a" stroke-width="6"/>
<path d="M1402,1398 L1405,1402 H1399 Z M1402,1426 L1399,1422 H1405 Z" fill="#e8662a"/>
<rect x="1433" y="1397.5" width="29.5" height="29.5" fill="#d8a020"/>
<path d="M1433,1427 L1448,1405 L1462.5,1427 Z" fill="#2f7fd0"/><path d="M1433,1427 V1410 L1448,1427 Z" fill="#e03020"/><path d="M1440,1415 H1456 V1424 H1440 Z" fill="#222"/><rect x="1433" y="1397.5" width="29.5" height="5" fill="#5a5ad0"/>
<g fill="none" stroke="#fff" stroke-width="2"><path d="M1478,1406 H1484 L1491,1399.5 V1423.5 L1484,1417 H1478 Z"/><path d="M1495,1406 Q1498,1411.5 1495,1417 M1499.5,1402 Q1504,1411.5 1499.5,1421 M1504,1399 Q1510,1411.5 1504,1424"/></g>
<g fill="none" stroke="#fff" stroke-width="2"><rect x="1530" y="1402" width="22" height="17"/><path d="M1525,1412 V1425 M1536,1419 V1424 M1531,1424 H1542"/></g>
<rect x="1522.5" y="1400" width="8" height="7" fill="#05080c" />
<rect x="1523.5" y="1401" width="7" height="6" fill="none" stroke="#fff" stroke-width="1.5"/>
<g fill="none" stroke="#fff" stroke-width="2"><path d="M1583,1422 L1598,1399 Q1601,1397 1602,1400 L1588,1424 Q1585,1428 1583,1424 Z M1586,1424 Q1577,1427 1577,1420 Q1578,1416 1581,1416 M1600,1408 Q1606,1410 1603,1414"/></g>
<g fill="none" stroke="#fff" stroke-width="2"><rect x="1628.5" y="1399.5" width="41" height="22.5"/></g>
<rect x="1633.0" y="1404" width="2.5" height="2" fill="#fff" />
<rect x="1637.1" y="1404" width="2.5" height="2" fill="#fff" />
<rect x="1641.2" y="1404" width="2.5" height="2" fill="#fff" />
<rect x="1645.3" y="1404" width="2.5" height="2" fill="#fff" />
<rect x="1649.4" y="1404" width="2.5" height="2" fill="#fff" />
<rect x="1653.5" y="1404" width="2.5" height="2" fill="#fff" />
<rect x="1657.6" y="1404" width="2.5" height="2" fill="#fff" />
<rect x="1661.7" y="1404" width="2.5" height="2" fill="#fff" />
<rect x="1665.8" y="1404" width="2.5" height="2" fill="#fff" />
<rect x="1633.0" y="1409" width="2.5" height="2" fill="#fff" />
<rect x="1637.1" y="1409" width="2.5" height="2" fill="#fff" />
<rect x="1641.2" y="1409" width="2.5" height="2" fill="#fff" />
<rect x="1645.3" y="1409" width="2.5" height="2" fill="#fff" />
<rect x="1649.4" y="1409" width="2.5" height="2" fill="#fff" />
<rect x="1653.5" y="1409" width="2.5" height="2" fill="#fff" />
<rect x="1657.6" y="1409" width="2.5" height="2" fill="#fff" />
<rect x="1661.7" y="1409" width="2.5" height="2" fill="#fff" />
<rect x="1665.8" y="1409" width="2.5" height="2" fill="#fff" />
<rect x="1633" y="1414" width="5" height="2" fill="#fff" />
<rect x="1640" y="1414" width="18" height="2" fill="#fff" />
<rect x="1660" y="1414" width="5" height="2" fill="#fff" />
<text x="1693.8" y="1418.5" font-family="Liberation Sans" font-size="22" fill="#ffffff" font-weight="normal" text-anchor="start" textLength="40" lengthAdjust="spacingAndGlyphs" >DEU</text>
<text x="1758.7" y="1418.5" font-family="Liberation Sans" font-size="22" fill="#ffffff" font-weight="normal" text-anchor="start" textLength="50" lengthAdjust="spacingAndGlyphs" >03:58</text>
<path d="M1843,1397.5 H1873 V1421 H1861 L1858,1425 L1855,1421 H1843 Z" fill="#fff"/>
<rect x="1847" y="1403" width="20" height="2" fill="#05080c" />
<rect x="1847" y="1408" width="20" height="2" fill="#05080c" />
<rect x="1847" y="1413" width="14" height="2" fill="#05080c" />
<rect x="1911.5" y="1384" width="1" height="56" fill="#7a7a7a" />
</svg></body></html>
